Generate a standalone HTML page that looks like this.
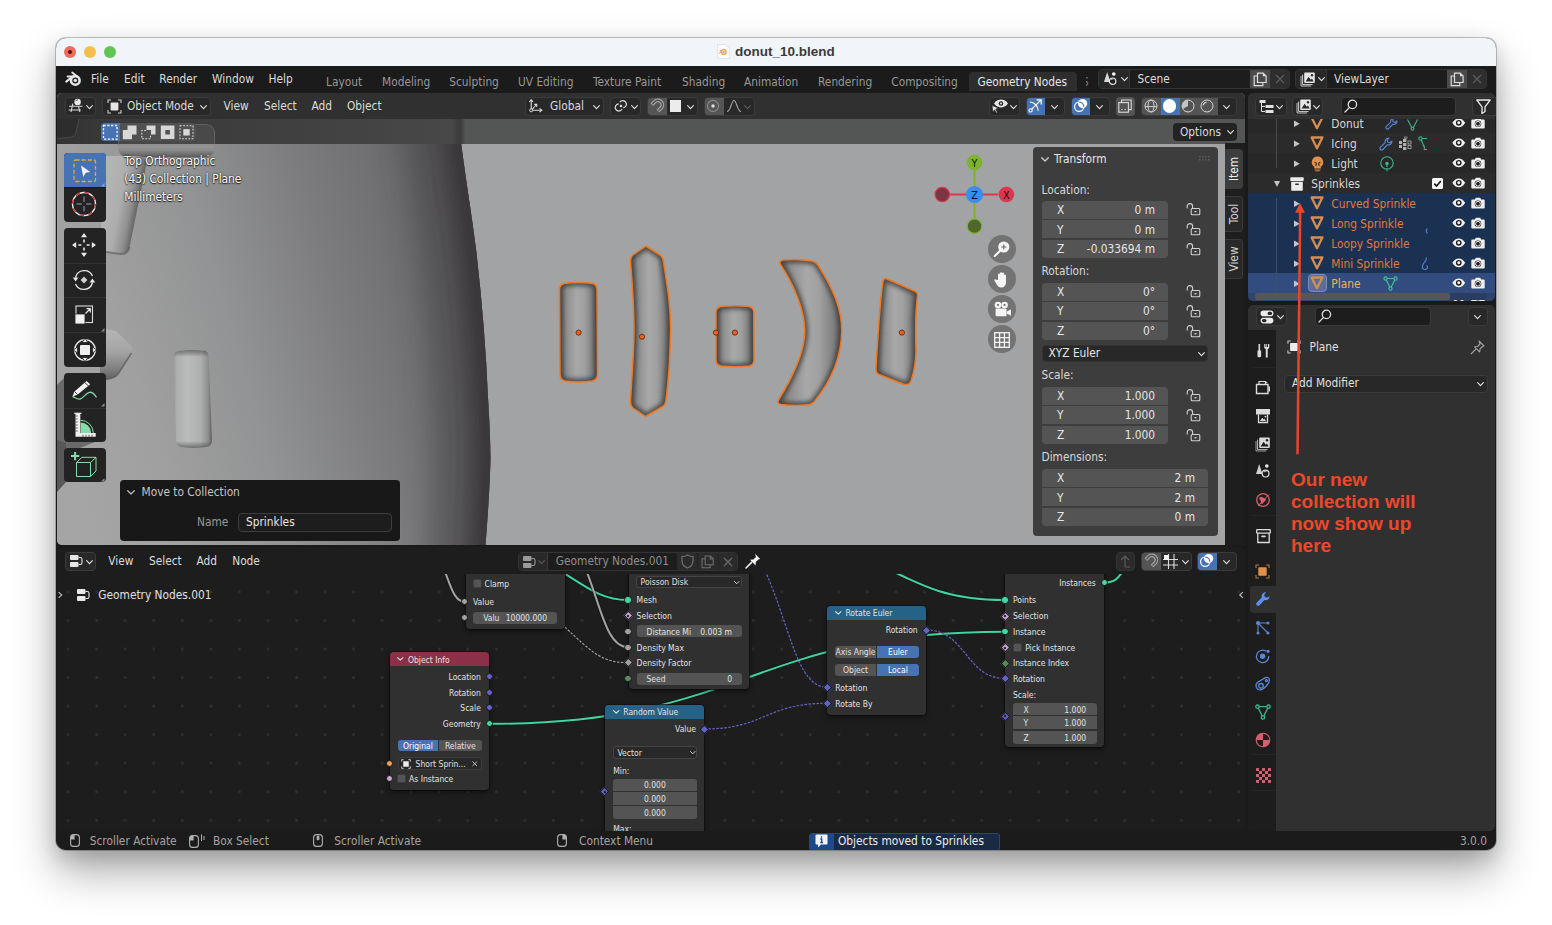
<!DOCTYPE html>
<html lang="en">
<head>
<meta charset="utf-8">
<title>donut_10.blend</title>
<style>
*{box-sizing:border-box;margin:0;padding:0}
html,body{width:1552px;height:925px;overflow:hidden;background:#fff}
body{position:relative;font-family:"DejaVu Sans Condensed","DejaVu Sans","Liberation Sans",sans-serif;font-stretch:condensed;font-size:11.8px;color:#dcdcdc;line-height:14px}
.a{position:absolute}
.t{position:absolute;white-space:nowrap;line-height:14px}
.r{text-align:right}
svg{position:absolute;overflow:visible}
#shadow{position:absolute;left:56px;top:38px;width:1440px;height:812px;border-radius:10px;box-shadow:0 22px 44px rgba(0,0,0,.32),0 8px 20px rgba(0,0,0,.15),0 0 0 1px rgba(0,0,0,.22)}
#win{position:absolute;left:0;top:0;width:1552px;height:925px;clip-path:inset(38px 56px 75px 56px round 10px);background:#1a1a1a}
#titlebar{left:56px;top:38px;width:1440px;height:28px;background:#f1f4f8}
.tl{position:absolute;top:46px;width:12px;height:12px;border-radius:50%}
#title{left:735px;top:44px;font-family:"Liberation Sans",sans-serif;font-stretch:normal;font-weight:bold;font-size:13.5px;color:#3b3b3b;line-height:15px}
.dim{color:#989898}
.btn{position:absolute;background:#282828;border:1px solid #3b3b3b;border-radius:4px}
.blue{background:#4772b3}
.fld{position:absolute;background:#545454;height:18px}
.s11{font-size:10.6px}
.n{font-size:8.5px;line-height:11px;color:#e2e2e2}
</style>
</head>
<body>
<div id="shadow"></div>
<div id="win">
<!-- TITLEBAR -->
<div class="a" id="titlebar"></div>
<div class="tl" style="left:64px;background:#ed6a5e"></div>
<div class="a" style="left:68px;top:50px;width:4px;height:4px;border-radius:50%;background:#5c0f08"></div>
<div class="tl" style="left:84px;background:#f5bf4f"></div>
<div class="tl" style="left:104px;background:#61c554"></div>
<svg style="left:717px;top:44px" width="13" height="15" viewBox="0 0 13 15"><path d="M0.5 0.5h8l4 4v10h-12z" fill="#fafafa" stroke="#d9d9d9" stroke-width=".6"/><circle cx="6.8" cy="8" r="2.3" fill="#fff" stroke="#ee9a45" stroke-width="1.3"/><circle cx="6.8" cy="8" r=".8" fill="#3b67b5"/><path d="M2 9.5l3-2.6M2.6 6.6h3" stroke="#ee9a45" stroke-width="1" fill="none"/></svg>
<div class="t" id="title">donut_10.blend</div>

<!-- TOPBAR -->
<div class="a" id="topbar" style="left:56px;top:66px;width:1440px;height:27px;background:#1b1b1b"></div>
<svg style="left:65px;top:71px" width="17" height="16" viewBox="0 0 17 16"><g fill="none" stroke="#e6e6e6" stroke-linecap="round"><circle cx="10.3" cy="9.4" r="4.3" stroke-width="2.6"/><path d="M7.2 1.6 L12.2 5.6" stroke-width="1.9"/><path d="M2.6 5.5 H9" stroke-width="1.9"/><path d="M1.3 10.6 L7 6" stroke-width="2.1"/></g><circle cx="10.3" cy="9.4" r="1.7" fill="#e6e6e6"/></svg>
<div class="t" style="left:91px;top:71.5px">File</div>
<div class="t" style="left:124px;top:71.5px">Edit</div>
<div class="t" style="left:159.3px;top:71.5px">Render</div>
<div class="t" style="left:212px;top:71.5px">Window</div>
<div class="t" style="left:268.6px;top:71.5px">Help</div>
<div class="t dim" style="left:326px;top:74.6px">Layout</div>
<div class="t dim" style="left:382px;top:74.6px">Modeling</div>
<div class="t dim" style="left:449.3px;top:74.6px">Sculpting</div>
<div class="t dim" style="left:518px;top:74.6px">UV Editing</div>
<div class="t dim" style="left:593px;top:74.6px">Texture Paint</div>
<div class="t dim" style="left:682px;top:74.6px">Shading</div>
<div class="t dim" style="left:744px;top:74.6px">Animation</div>
<div class="t dim" style="left:818px;top:74.6px">Rendering</div>
<div class="t dim" style="left:891.3px;top:74.6px">Compositing</div>
<div class="a" style="left:969px;top:71.500px;width:108px;height:19px;background:#2e2e2e;border-radius:4px 4px 0 0"></div>
<div class="t" style="left:977.5px;top:74.6px;color:#e8e8e8">Geometry Nodes</div>
<div class="a" style="left:1086px;top:72px;width:5px;height:20px;overflow:hidden"><div class="t dim" style="left:-4px;top:2.6px;color:#777">S</div></div>
<!-- scene selector -->
<div class="a" style="left:1098px;top:69px;width:192px;height:20px;border:1px solid #343434;border-radius:4px;background:#1d1d1d;overflow:hidden">
 <div class="a" style="left:0;top:0;width:31px;height:18px;background:#282828;border-right:1px solid #363636"></div>
 <div class="a" style="left:151px;top:0;width:20px;height:18px;background:#4a4a4a"></div>
 <div class="a" style="left:171px;top:0;width:20px;height:18px;background:#2e2e2e"></div>
</div>
<svg style="left:1103px;top:71px" width="16" height="16" viewBox="0 0 16 16"><path d="M4.2 1 L7.4 11 H1 Z" fill="#d8d8d8"/><circle cx="10.8" cy="3" r="1.8" fill="#fff"/><circle cx="9.6" cy="10.2" r="3.2" fill="#1f1f1f" stroke="#e6e6e6" stroke-width="1.2"/><path d="M8 8.6a2.3 2.3 0 0 1 2.4-.6" stroke="#e6e6e6" stroke-width=".9" fill="none"/></svg>
<svg style="left:1120.5px;top:76.5px;color:#e0e0e0" width="7" height="4.5" viewBox="0 0 8 5" preserveAspectRatio="none"><path d="M0.7 0.7 L4 4 L7.3 0.7" fill="none" stroke="currentColor" stroke-width="1.3" stroke-linecap="round" stroke-linejoin="round"/></svg>
<div class="t" style="left:1137.5px;top:71.6px">Scene</div>
<svg style="left:1253px;top:71.5px" width="15" height="15" viewBox="0 0 15 15" fill="none" stroke="#dedede" stroke-width="1.2"><path d="M4.5 3.5V1.1h5.6l3 3V10.5H4.5z" fill="#4a4a4a"/><path d="M9.9 1.1v3.2h3.2" fill="#dedede" stroke="none"/><path d="M4.5 4H1.2v9.6h8.6v-3"/></svg>
<svg style="left:1275px;top:74px" width="10" height="10" viewBox="0 0 10 10"><path d="M1 1L9 9M9 1L1 9" stroke="#5e5e5e" stroke-width="1.1"/></svg>
<!-- viewlayer selector -->
<div class="a" style="left:1295px;top:69px;width:192px;height:20px;border:1px solid #343434;border-radius:4px;background:#1d1d1d;overflow:hidden">
 <div class="a" style="left:0;top:0;width:31px;height:18px;background:#282828;border-right:1px solid #363636"></div>
 <div class="a" style="left:151px;top:0;width:20px;height:18px;background:#4a4a4a"></div>
 <div class="a" style="left:171px;top:0;width:20px;height:18px;background:#2e2e2e"></div>
</div>
<svg style="left:1300px;top:71px" width="16" height="16" viewBox="0 0 16 16"><path d="M1 5v10h10" fill="none" stroke="#bdbdbd" stroke-width="1"/><path d="M2.6 3.6v10h10" fill="none" stroke="#d0d0d0" stroke-width="1"/><rect x="4.2" y="1.4" width="10.6" height="10.6" rx="1" fill="#e6e6e6"/><path d="M5.6 10.4l3-4.6 2.2 3 1.2-1.4 1.6 3z" fill="#2a2a2a"/><circle cx="12" cy="4.3" r="1.2" fill="#2a2a2a"/></svg>
<svg style="left:1317.5px;top:76.5px;color:#e0e0e0" width="7" height="4.5" viewBox="0 0 8 5" preserveAspectRatio="none"><path d="M0.7 0.7 L4 4 L7.3 0.7" fill="none" stroke="currentColor" stroke-width="1.3" stroke-linecap="round" stroke-linejoin="round"/></svg>
<div class="t" style="left:1334px;top:71.6px">ViewLayer</div>
<svg style="left:1450px;top:71.5px" width="15" height="15" viewBox="0 0 15 15" fill="none" stroke="#dedede" stroke-width="1.2"><path d="M4.5 3.5V1.1h5.6l3 3V10.5H4.5z" fill="#4a4a4a"/><path d="M9.9 1.1v3.2h3.2" fill="#dedede" stroke="none"/><path d="M4.5 4H1.2v9.6h8.6v-3"/></svg>
<svg style="left:1472px;top:74px" width="10" height="10" viewBox="0 0 10 10"><path d="M1 1L9 9M9 1L1 9" stroke="#5e5e5e" stroke-width="1.1"/></svg>

<!-- VIEWPORT SCENE -->
<div class="a" id="vp" style="left:57px;top:93px;width:1188px;height:452px;background:#a1a3a5;border-radius:5px;overflow:hidden">
<svg style="left:0;top:0" width="1188" height="452" viewBox="57 93 1188 452">
<defs>
<linearGradient id="gbig" gradientUnits="userSpaceOnUse" x1="60" y1="440" x2="480" y2="318">
<stop offset="0" stop-color="#a5a5a5"/><stop offset=".2" stop-color="#a0a0a0"/><stop offset=".45" stop-color="#929394"/><stop offset=".7" stop-color="#7c7c7e"/><stop offset=".93" stop-color="#6b6b6d"/><stop offset="1" stop-color="#656567"/>
</linearGradient>
<clipPath id="cbig"><path d="M57 93 H455 L458 118 C464 170 472 215 476 249 C482 300 486 350 488 398 C490 430 491 455 490 473 C489 500 487 525 485.5 545 H57 Z"/></clipPath>
<filter id="bl18" filterUnits="userSpaceOnUse" x="250" y="20" width="400" height="600"><feGaussianBlur stdDeviation="16"/></filter>
<filter id="bl8" filterUnits="userSpaceOnUse" x="330" y="20" width="260" height="600"><feGaussianBlur stdDeviation="7"/></filter>
<filter id="bl3" filterUnits="userSpaceOnUse" x="370" y="20" width="180" height="600"><feGaussianBlur stdDeviation="2.5"/></filter>
<linearGradient id="gcap" x1="0" y1="0" x2="1" y2="0">
<stop offset="0" stop-color="#5f5f5f"/><stop offset=".12" stop-color="#8a8a8a"/><stop offset=".4" stop-color="#a8a8a8"/><stop offset=".6" stop-color="#a2a2a2"/><stop offset=".85" stop-color="#7c7c7c"/><stop offset="1" stop-color="#565656"/>
</linearGradient>
<linearGradient id="gcapv" x1="0" y1="0" x2="0" y2="1">
<stop offset="0" stop-color="#6a6a6a"/><stop offset=".2" stop-color="#9c9c9c"/><stop offset=".5" stop-color="#a9a9a9"/><stop offset=".8" stop-color="#8a8a8a"/><stop offset="1" stop-color="#5c5c5c"/>
</linearGradient>
<linearGradient id="gends" x1="0" y1="0" x2="0" y2="1">
<stop offset="0" stop-color="#333" stop-opacity=".55"/><stop offset=".07" stop-color="#333" stop-opacity="0"/><stop offset=".93" stop-color="#333" stop-opacity="0"/><stop offset="1" stop-color="#333" stop-opacity=".55"/>
</linearGradient>
<linearGradient id="gtilt" gradientUnits="userSpaceOnUse" x1="104" y1="200" x2="140" y2="207"><stop offset="0" stop-color="#b4b4b4"/><stop offset=".45" stop-color="#adadad"/><stop offset=".75" stop-color="#8e8e8e"/><stop offset="1" stop-color="#585858"/></linearGradient>
<linearGradient id="gpt" x1="0" y1="0" x2="0" y2="1"><stop offset="0" stop-color="#b6b6b6"/><stop offset=".45" stop-color="#a4a4a4"/><stop offset=".8" stop-color="#7c7c7c"/><stop offset="1" stop-color="#5c5c5c"/></linearGradient>
<linearGradient id="gcap2" x1="0" y1="0" x2="1" y2="0"><stop offset="0" stop-color="#9a9a9a"/><stop offset=".08" stop-color="#adaeae"/><stop offset=".35" stop-color="#babbbc"/><stop offset=".7" stop-color="#aeafb0"/><stop offset=".9" stop-color="#8e8e8e"/><stop offset="1" stop-color="#5e5e5e"/></linearGradient>
<filter id="soft"><feGaussianBlur stdDeviation="1.2"/></filter>
</defs>
<!-- big dark object -->
<path d="M57 93 H455 L458 118 C464 170 472 215 476 249 C482 300 486 350 488 398 C490 430 491 455 490 473 C489 500 487 525 485.5 545 H57 Z" fill="url(#gbig)"/>
<g clip-path="url(#cbig)"><path d="M455 60 L458 118 C464 170 472 215 476 249 C482 300 486 350 488 398 C490 430 491 455 490 473 C489 500 487 525 485.500 580" fill="none" stroke="#3a393b" stroke-width="110" filter="url(#bl18)" opacity=".5"/><path d="M455 60 L458 118 C464 170 472 215 476 249 C482 300 486 350 488 398 C490 430 491 455 490 473 C489 500 487 525 485.500 580" fill="none" stroke="#3a393b" stroke-width="40" filter="url(#bl8)" opacity=".7"/><path d="M455 60 L458 118 C464 170 472 215 476 249 C482 300 486 350 488 398 C490 430 491 455 490 473 C489 500 487 525 485.500 580" fill="none" stroke="#3b393b" stroke-width="16" filter="url(#bl3)" opacity=".9"/></g>
<!-- background sprinkles on left -->
<path d="M57 118 H100 L94 133 Q92 137 86 137 L57 138 Z" fill="#6d6d6d"/>
<rect x="118" y="124" width="97" height="33" rx="9" fill="url(#gcapv)"/>
<path d="M104 156 L139 156 Q147.500 157 146 166 L129.500 247 Q127.500 255 119.500 254 L100 251 Z" fill="url(#gtilt)"/><path d="M129.500 247 Q127.500 255 119.500 254 L100 251" fill="none" stroke="#5a5a5a" stroke-width="2" opacity=".6"/>
<path d="M100 328 L112 330 Q116 331 118 333 L131 346 Q134 349 131.500 353 L118 374 Q116 377 112 378 L100 381 Z" fill="url(#gpt)"/><path d="M131.500 353 L118 374 Q116 377 112 378 L100 381" fill="none" stroke="#555" stroke-width="1.500" opacity=".7"/>
<path d="M57 385 L66 376 L100 376 L100 440 L70 452 L57 446 Z" fill="#6a6a6a"/>
<path d="M57 440 L66 443 L66 482 L57 492 Z" fill="#585858"/>
<!-- standalone sprinkle -->
<path d="M178.500 351 Q191.500 349 205.500 351 Q208.500 352 208.500 356 L212 440 Q212 446 206 447 Q193 449 181 447 Q176 446 176 441 L173.500 357 Q173.500 352 178.500 351 Z" fill="url(#gcap2)"/>
<path d="M178.500 351 Q191.500 349 205.500 351 Q208.500 352 208.500 356 L212 440 Q212 446 206 447 Q193 449 181 447 Q176 446 176 441 L173.500 357 Q173.500 352 178.500 351 Z" fill="url(#gends)"/>
</svg>
</div>

<!-- SPRINKLES -->
<svg style="left:540px;top:235px" width="400" height="195" viewBox="540 235 400 195">
<defs>
<linearGradient id="gsp" x1="0" y1="0" x2="1" y2="0"><stop offset="0" stop-color="#6a6a6a"/><stop offset=".18" stop-color="#8e8e8e"/><stop offset=".45" stop-color="#a8a8a8"/><stop offset=".65" stop-color="#a0a0a0"/><stop offset=".88" stop-color="#7e7e7e"/><stop offset="1" stop-color="#606060"/></linearGradient>
<filter id="bsp" x="-30%" y="-30%" width="160%" height="160%"><feGaussianBlur stdDeviation="2"/></filter>
<clipPath id="cs1"><path d="M564 283.500 Q578 281.500 593 283.500 Q596.500 284.500 597 289 L597.500 374 Q597.500 380 592 381 Q578 383 565 381 Q560 380 560 374 L559.500 289 Q560 284.500 564 283.500 Z"/></clipPath>
<clipPath id="cs2"><path d="M646 246 L660 255 Q663 257 663.500 262 C668 290 671 310 670.500 332 C670 360 668 385 666 400 Q665.500 405 662 407 L645.500 416.500 L633 408 Q630.500 406 630.500 401 C632 375 634 350 634 330 C634 305 632 280 630.500 262 Q630.500 257 633 255 Z"/></clipPath>
<clipPath id="cs3"><path d="M721 306.500 Q735 305 749 306.500 Q753.500 307.500 753.800 312 L754 360 Q754 365 749 366 Q735 367.500 721 366 Q716 365 716 360 L716 312 Q716.200 307.500 721 306.500 Z"/></clipPath>
<clipPath id="cs4"><path d="M783 260 Q798 258.500 812 261 Q816 262 818 265 C834 290 842 310 841.700 331 C841.500 355 832 380 814 402 Q811 405 806 405 Q793 406 781 404.500 Q776.500 403.500 778.500 400 C794 375 805 350 804.800 330.500 C804.500 310 794 285 780.500 264.500 Q778.500 261 783 260 Z"/></clipPath>
<clipPath id="cs5"><path d="M886 278.500 Q884 278 883 281 C880 300 878.500 325 876 368 Q875.500 373 879 374.500 L903 384 Q909 386 911 381 C914 372 916 362 916 350 C915.500 335 915 315 917.500 296 Q918 292.500 914.500 291 Z"/></clipPath>
</defs>
<path d="M564 283.500 Q578 281.500 593 283.500 Q596.500 284.500 597 289 L597.500 374 Q597.500 380 592 381 Q578 383 565 381 Q560 380 560 374 L559.500 289 Q560 284.500 564 283.500 Z" fill="url(#gsp)"/>
<g clip-path="url(#cs1)"><path d="M564 283.500 Q578 281.500 593 283.500 Q596.500 284.500 597 289 L597.500 374 Q597.500 380 592 381 Q578 383 565 381 Q560 380 560 374 L559.500 289 Q560 284.500 564 283.500 Z" fill="none" stroke="#3c3c3c" stroke-width="7" filter="url(#bsp)" opacity=".8"/></g>
<path d="M564 283.500 Q578 281.500 593 283.500 Q596.500 284.500 597 289 L597.500 374 Q597.500 380 592 381 Q578 383 565 381 Q560 380 560 374 L559.500 289 Q560 284.500 564 283.500 Z" fill="none" stroke="#f5771c" stroke-width="1.500" stroke-linejoin="round"/>
<path d="M646 246 L660 255 Q663 257 663.500 262 C668 290 671 310 670.500 332 C670 360 668 385 666 400 Q665.500 405 662 407 L645.500 416.500 L633 408 Q630.500 406 630.500 401 C632 375 634 350 634 330 C634 305 632 280 630.500 262 Q630.500 257 633 255 Z" fill="url(#gsp)"/>
<g clip-path="url(#cs2)"><path d="M646 246 L660 255 Q663 257 663.500 262 C668 290 671 310 670.500 332 C670 360 668 385 666 400 Q665.500 405 662 407 L645.500 416.500 L633 408 Q630.500 406 630.500 401 C632 375 634 350 634 330 C634 305 632 280 630.500 262 Q630.500 257 633 255 Z" fill="none" stroke="#3c3c3c" stroke-width="7" filter="url(#bsp)" opacity=".8"/></g>
<path d="M646 246 L660 255 Q663 257 663.500 262 C668 290 671 310 670.500 332 C670 360 668 385 666 400 Q665.500 405 662 407 L645.500 416.500 L633 408 Q630.500 406 630.500 401 C632 375 634 350 634 330 C634 305 632 280 630.500 262 Q630.500 257 633 255 Z" fill="none" stroke="#f5771c" stroke-width="1.500" stroke-linejoin="round"/>
<path d="M721 306.500 Q735 305 749 306.500 Q753.500 307.500 753.800 312 L754 360 Q754 365 749 366 Q735 367.500 721 366 Q716 365 716 360 L716 312 Q716.200 307.500 721 306.500 Z" fill="url(#gsp)"/>
<g clip-path="url(#cs3)"><path d="M721 306.500 Q735 305 749 306.500 Q753.500 307.500 753.800 312 L754 360 Q754 365 749 366 Q735 367.500 721 366 Q716 365 716 360 L716 312 Q716.200 307.500 721 306.500 Z" fill="none" stroke="#3c3c3c" stroke-width="7" filter="url(#bsp)" opacity=".8"/></g>
<path d="M721 306.500 Q735 305 749 306.500 Q753.500 307.500 753.800 312 L754 360 Q754 365 749 366 Q735 367.500 721 366 Q716 365 716 360 L716 312 Q716.200 307.500 721 306.500 Z" fill="none" stroke="#f5771c" stroke-width="1.500" stroke-linejoin="round"/>
<path d="M783 260 Q798 258.500 812 261 Q816 262 818 265 C834 290 842 310 841.700 331 C841.500 355 832 380 814 402 Q811 405 806 405 Q793 406 781 404.500 Q776.500 403.500 778.500 400 C794 375 805 350 804.800 330.500 C804.500 310 794 285 780.500 264.500 Q778.500 261 783 260 Z" fill="url(#gsp)"/>
<g clip-path="url(#cs4)"><path d="M783 260 Q798 258.500 812 261 Q816 262 818 265 C834 290 842 310 841.700 331 C841.500 355 832 380 814 402 Q811 405 806 405 Q793 406 781 404.500 Q776.500 403.500 778.500 400 C794 375 805 350 804.800 330.500 C804.500 310 794 285 780.500 264.500 Q778.500 261 783 260 Z" fill="none" stroke="#3c3c3c" stroke-width="7" filter="url(#bsp)" opacity=".8"/></g>
<path d="M783 260 Q798 258.500 812 261 Q816 262 818 265 C834 290 842 310 841.700 331 C841.500 355 832 380 814 402 Q811 405 806 405 Q793 406 781 404.500 Q776.500 403.500 778.500 400 C794 375 805 350 804.800 330.500 C804.500 310 794 285 780.500 264.500 Q778.500 261 783 260 Z" fill="none" stroke="#f5771c" stroke-width="1.500" stroke-linejoin="round"/>
<path d="M886 278.500 Q884 278 883 281 C880 300 878.500 325 876 368 Q875.500 373 879 374.500 L903 384 Q909 386 911 381 C914 372 916 362 916 350 C915.500 335 915 315 917.500 296 Q918 292.500 914.500 291 Z" fill="url(#gsp)"/>
<g clip-path="url(#cs5)"><path d="M886 278.500 Q884 278 883 281 C880 300 878.500 325 876 368 Q875.500 373 879 374.500 L903 384 Q909 386 911 381 C914 372 916 362 916 350 C915.500 335 915 315 917.500 296 Q918 292.500 914.500 291 Z" fill="none" stroke="#3c3c3c" stroke-width="7" filter="url(#bsp)" opacity=".8"/></g>
<path d="M886 278.500 Q884 278 883 281 C880 300 878.500 325 876 368 Q875.500 373 879 374.500 L903 384 Q909 386 911 381 C914 372 916 362 916 350 C915.500 335 915 315 917.500 296 Q918 292.500 914.500 291 Z" fill="none" stroke="#f5771c" stroke-width="1.500" stroke-linejoin="round"/>
<circle cx="578.6" cy="332.6" r="2.600" fill="#f0601c" stroke="#4a2410" stroke-width=".800"/>
<circle cx="642" cy="336.7" r="2.600" fill="#f0601c" stroke="#4a2410" stroke-width=".800"/>
<circle cx="716" cy="332.6" r="2.600" fill="#f0601c" stroke="#4a2410" stroke-width=".800"/>
<circle cx="734.9" cy="332.6" r="2.600" fill="#f0601c" stroke="#4a2410" stroke-width=".800"/>
<circle cx="901.9" cy="332.6" r="2.600" fill="#f0601c" stroke="#4a2410" stroke-width=".800"/>
</svg>

<!-- VIEWPORT HEADER -->
<div class="a" style="left:57px;top:93px;width:1188px;height:25.5px;background:#303030;border-radius:5px 5px 0 0"></div>
<div class="a" style="left:57px;top:118.500px;width:1188px;height:25px;background:linear-gradient(to right,#333 0,#3a3a3a 5%,#3f3f3f 18%,#464646 30%,#484848 33.2%,#3d3d3d 33.7%,#3d3d3d 34%,#545655 34.4%,#545655 100%)"></div>
<div class="a" style="left:118px;top:124px;width:97px;height:22px;border-radius:9px 9px 0 0;border:1px solid rgba(125,125,125,.5);border-bottom:none;background:rgba(110,110,110,.25)"></div>
<!-- editor type -->
<div class="btn" style="left:64.5px;top:96.5px;width:31px;height:19px"></div>
<svg style="left:68px;top:98px" width="16" height="15" viewBox="0 0 16 15"><g stroke="#d6d6d6" stroke-width="1.1" fill="none"><path d="M1 8.3H14.5M0.6 12H13"/><path d="M4.8 5.6L3 14M10.5 8.4L11.8 14"/></g><circle cx="9.6" cy="3.9" r="3.2" fill="#ececec"/><path d="M7.6 3.2a2.2 2.2 0 0 1 2.5-1.3" stroke="#303030" stroke-width=".8" fill="none"/></svg>
<svg style="left:86px;top:104.5px;color:#e0e0e0" width="7" height="4.5" viewBox="0 0 8 5" preserveAspectRatio="none"><path d="M0.7 0.7 L4 4 L7.3 0.7" fill="none" stroke="currentColor" stroke-width="1.3" stroke-linecap="round" stroke-linejoin="round"/></svg>
<!-- object mode -->
<div class="btn" style="left:101.5px;top:96.5px;width:109px;height:19px"></div>
<svg style="left:106.5px;top:98.5px" width="15" height="15" viewBox="0 0 15 15"><path d="M1 4V1H4M11 1H14V4M14 11V14H11M4 14H1V11" fill="none" stroke="#d0d0d0" stroke-width="1.1"/><rect x="3.6" y="3.6" width="7.8" height="7.8" rx=".8" fill="#e6e6e6"/></svg>
<div class="t" style="left:127px;top:98.7px">Object Mode</div>
<svg style="left:199.5px;top:104.5px;color:#e0e0e0" width="7" height="4.5" viewBox="0 0 8 5" preserveAspectRatio="none"><path d="M0.7 0.7 L4 4 L7.3 0.7" fill="none" stroke="currentColor" stroke-width="1.3" stroke-linecap="round" stroke-linejoin="round"/></svg>
<div class="t" style="left:223.5px;top:98.7px">View</div>
<div class="t" style="left:264px;top:98.7px">Select</div>
<div class="t" style="left:311.5px;top:98.7px">Add</div>
<div class="t" style="left:347px;top:98.7px">Object</div>
<!-- transform orientation -->
<div class="btn" style="left:524.5px;top:96.5px;width:79px;height:19px"></div>
<svg style="left:528px;top:98px" width="16" height="16" viewBox="0 0 16 16"><g fill="none" stroke="#dcdcdc" stroke-width="1.1"><path d="M3.2 2V12.3H13.5M3.2 12.3L8.5 6.5"/><path d="M1.4 4L3.2 1.6L5 4M11.5 10.4L13.8 12.3L11.5 14.2M6.2 6.4h2.5v2.5"/></g><circle cx="3.2" cy="12.3" r="1.5" fill="#303030" stroke="#dcdcdc" stroke-width="1"/></svg>
<div class="t" style="left:550px;top:98.7px">Global</div>
<svg style="left:593px;top:104.5px;color:#e0e0e0" width="7" height="4.5" viewBox="0 0 8 5" preserveAspectRatio="none"><path d="M0.7 0.7 L4 4 L7.3 0.7" fill="none" stroke="currentColor" stroke-width="1.3" stroke-linecap="round" stroke-linejoin="round"/></svg>
<!-- pivot -->
<div class="btn" style="left:609.5px;top:96.5px;width:31px;height:19px"></div>
<svg style="left:612.5px;top:98px" width="16" height="16" viewBox="0 0 16 16"><g fill="none" stroke="#dcdcdc" stroke-width="1.2"><path d="M6.8 4.2a3.6 3.6 0 1 1 3.4 5.6"/><path d="M9 11.3a3.6 3.6 0 1 1-3.3-5.4"/></g><circle cx="8" cy="8" r="1.3" fill="#dcdcdc"/></svg>
<svg style="left:631px;top:104.5px;color:#e0e0e0" width="7" height="4.5" viewBox="0 0 8 5" preserveAspectRatio="none"><path d="M0.7 0.7 L4 4 L7.3 0.7" fill="none" stroke="currentColor" stroke-width="1.3" stroke-linecap="round" stroke-linejoin="round"/></svg>
<!-- snap -->
<div class="btn" style="left:646.5px;top:96.5px;width:51px;height:19px;overflow:hidden"><div class="a" style="left:0;top:0;width:19px;height:17px;background:#555"></div></div>
<svg style="left:649px;top:98px" width="15" height="16" viewBox="0 0 15 16"><path d="M2.800 6.600L6.200 3.300A4.500 4.500 0 0 1 12.400 9.700L9 13" fill="none" stroke="#a6a6a6" stroke-width="3.700" stroke-linecap="butt"/><path d="M3.300 6.100L6.200 3.300A4.500 4.500 0 0 1 12.400 9.700L9.500 12.500" fill="none" stroke="#555" stroke-width="1.500" stroke-linecap="butt"/></svg>

<div class="a" style="left:669.5px;top:100px;width:11.5px;height:11.5px;background:#ececec"></div>
<svg style="left:686.5px;top:104.5px;color:#e0e0e0" width="7" height="4.5" viewBox="0 0 8 5" preserveAspectRatio="none"><path d="M0.7 0.7 L4 4 L7.3 0.7" fill="none" stroke="currentColor" stroke-width="1.3" stroke-linecap="round" stroke-linejoin="round"/></svg>
<!-- proportional -->
<div class="btn" style="left:703.5px;top:96.5px;width:51px;height:19px;overflow:hidden"><div class="a" style="left:0;top:0;width:19px;height:17px;background:#555"></div></div>
<svg style="left:706px;top:99px" width="14" height="14" viewBox="0 0 14 14"><circle cx="7" cy="7" r="5.6" fill="none" stroke="#8a8a8a" stroke-width="1.1"/><circle cx="7" cy="7" r="1.7" fill="#dcdcdc"/></svg>
<svg style="left:726px;top:99px" width="16" height="14" viewBox="0 0 16 14"><path d="M1 12.5C5 12.5 5.2 1.5 8 1.5S11 12.5 15 12.5" fill="none" stroke="#a4a4a4" stroke-width="1.1"/></svg>
<svg style="left:744px;top:104.5px;color:#5a5a5a" width="7" height="4.5" viewBox="0 0 8 5" preserveAspectRatio="none"><path d="M0.7 0.7 L4 4 L7.3 0.7" fill="none" stroke="currentColor" stroke-width="1.3" stroke-linecap="round" stroke-linejoin="round"/></svg>
<!-- right group: visibility -->
<div class="btn" style="left:988.5px;top:96.5px;width:31px;height:19px"></div>
<svg style="left:991px;top:97.5px" width="18" height="17" viewBox="0 0 18 17"><path d="M3 5.5C5 2.4 8 1.6 10 1.6s5 .8 7 3.9C15 8.6 12 9.4 10 9.4S5 8.6 3 5.5z" fill="#e6e6e6"/><circle cx="10" cy="5.5" r="2.3" fill="#282828"/><circle cx="10" cy="5.5" r="1" fill="#e6e6e6"/><path d="M1 7.5l6.2 2.6-2.5 1.2 1.7 3-1.1.6-1.7-3L2 13.8z" fill="#e6e6e6" stroke="#282828" stroke-width=".6"/></svg>
<svg style="left:1010px;top:104.5px;color:#e0e0e0" width="7" height="4.5" viewBox="0 0 8 5" preserveAspectRatio="none"><path d="M0.7 0.7 L4 4 L7.3 0.7" fill="none" stroke="currentColor" stroke-width="1.3" stroke-linecap="round" stroke-linejoin="round"/></svg>
<!-- gizmo -->
<div class="btn" style="left:1026px;top:96.5px;width:39px;height:19px;overflow:hidden"><div class="a blue" style="left:0;top:0;width:18px;height:17px"></div></div>
<svg style="left:1028px;top:98px" width="15" height="15" viewBox="0 0 15 15"><g fill="none" stroke="#fff" stroke-width="1.2"><path d="M2.5 12.5L12.8 2.2M8.6 1.8h4.6v4.6"/><path d="M2 4.2c4.2 0 8.2 3.8 8.2 8.6"/></g><circle cx="2.6" cy="12.4" r="1.6" fill="#4772b3" stroke="#fff" stroke-width="1.1"/></svg>
<svg style="left:1050.5px;top:104.5px;color:#e0e0e0" width="7" height="4.5" viewBox="0 0 8 5" preserveAspectRatio="none"><path d="M0.7 0.7 L4 4 L7.3 0.7" fill="none" stroke="currentColor" stroke-width="1.3" stroke-linecap="round" stroke-linejoin="round"/></svg>
<!-- overlay -->
<div class="btn" style="left:1071px;top:96.5px;width:39px;height:19px;overflow:hidden"><div class="a blue" style="left:0;top:0;width:18px;height:17px"></div></div>
<svg style="left:1072.5px;top:98px" width="16" height="15" viewBox="0 0 16 15"><circle cx="9.6" cy="5.6" r="4.6" fill="#fff"/><circle cx="6.2" cy="8.8" r="4.6" fill="none" stroke="#fff" stroke-width="1.2"/><path d="M6.2 4.2a4.6 4.6 0 0 1 4.6 4.6" fill="none" stroke="#4772b3" stroke-width="1.2"/></svg>
<svg style="left:1095.5px;top:104.5px;color:#e0e0e0" width="7" height="4.5" viewBox="0 0 8 5" preserveAspectRatio="none"><path d="M0.7 0.7 L4 4 L7.3 0.7" fill="none" stroke="currentColor" stroke-width="1.3" stroke-linecap="round" stroke-linejoin="round"/></svg>
<!-- xray -->
<div class="a" style="left:1115.5px;top:96.5px;width:19px;height:19px;background:#545454;border-radius:4px"></div>
<svg style="left:1118px;top:99px" width="14" height="14" viewBox="0 0 14 14" fill="none" stroke="#dcdcdc" stroke-width="1.1"><path d="M3.6 3.4V1h9.6v9.6h-2.4"/><rect x=".8" y="3.6" width="9.6" height="9.6"/><path d="M3.4 6.5v.01M3.4 10.5H4.5M6.6 10.5h1.2" stroke-width="1.2"/></svg>
<!-- shading -->
<div class="a" style="left:1140.5px;top:96.5px;width:96px;height:19px;border-radius:4px;overflow:hidden;background:#282828;border:1px solid #3b3b3b">
<div class="a" style="left:0;top:0;width:19px;height:17px;background:#545454"></div>
<div class="a blue" style="left:19.5px;top:0;width:18.5px;height:17px"></div>
<div class="a" style="left:38.5px;top:0;width:18.5px;height:17px;background:#545454"></div>
<div class="a" style="left:57.5px;top:0;width:18.5px;height:17px;background:#545454"></div>
</div>
<svg style="left:1143.5px;top:99px" width="14" height="14" viewBox="0 0 14 14" fill="none" stroke="#d0d0d0" stroke-width="1"><circle cx="7" cy="7" r="6"/><path d="M1.100 7.600H12.900"/><ellipse cx="7" cy="7" rx="3" ry="6"/></svg>
<div class="a" style="left:1163px;top:99.3px;width:13.4px;height:13.4px;border-radius:50%;background:#fff"></div>
<svg style="left:1181px;top:99px" width="14" height="14" viewBox="0 0 14 14"><circle cx="7" cy="7" r="6" fill="none" stroke="#d0d0d0" stroke-width="1"/><path d="M7 7V1A6 6 0 0 0 1.8 10z" fill="#c4c4c4"/><path d="M3.5 11.5l1 .8M5.8 12.6l1.2.3M9 12.4l1-.5" stroke="#d0d0d0" stroke-width=".9"/></svg>
<svg style="left:1200px;top:99px" width="14" height="14" viewBox="0 0 14 14"><circle cx="7" cy="7" r="6" fill="none" stroke="#d0d0d0" stroke-width="1"/><path d="M3.2 6.4a4 4 0 0 1 3.4-3.3" fill="none" stroke="#d0d0d0" stroke-width="1.2"/><path d="M5 12l1.2.5M8 12.6l1.2-.4M10.4 11.4l.8-.9" stroke="#d0d0d0" stroke-width=".9"/></svg>
<svg style="left:1222.5px;top:104.5px;color:#e0e0e0" width="7" height="4.5" viewBox="0 0 8 5" preserveAspectRatio="none"><path d="M0.7 0.7 L4 4 L7.3 0.7" fill="none" stroke="currentColor" stroke-width="1.3" stroke-linecap="round" stroke-linejoin="round"/></svg>
<!-- selection mode buttons -->
<div class="a" style="left:101px;top:122.500px;width:94.500px;height:18.500px;border-radius:4px;overflow:hidden;background:#383838">
<div class="a blue" style="left:0;top:0;width:18.600px;height:18.500px"></div>
<div class="a" style="left:19.200px;top:0;width:18.400px;height:18.500px;background:#515151"></div>
<div class="a" style="left:38.200px;top:0;width:18.400px;height:18.500px;background:#515151"></div>
<div class="a" style="left:57.200px;top:0;width:18.400px;height:18.500px;background:#515151"></div>
<div class="a" style="left:76.200px;top:0;width:18.400px;height:18.500px;background:#515151"></div>
</div>
<svg style="left:101px;top:122.500px" width="95" height="19" viewBox="0 0 95 19">
<rect x="2.500" y="2.500" width="13.600" height="13.600" fill="none" stroke="#fff" stroke-width="1.300" stroke-dasharray="2.200 1.600"/>
<path d="M26.500 2.500h9v9h-4.500v4.800h-9.200V7h4.700z" fill="#d8d8d8"/>
<path d="M45.500 2.500h9v9h-4.500V7h-4.500z" fill="#d8d8d8"/><path d="M45 7.500h-4.200v8.300h8.700v-4" fill="none" stroke="#d8d8d8" stroke-width="1.100" stroke-dasharray="1.800 1.400"/>
<path d="M59.800 2.500h13.600v13.600h-13.600z M64.300 7v4.600h4.600V7z" fill="#d8d8d8" fill-rule="evenodd"/>
<rect x="79" y="2.800" width="13" height="13" fill="none" stroke="#d8d8d8" stroke-width="1.100" stroke-dasharray="1.800 1.400"/><rect x="82.300" y="6.100" width="6.400" height="6.400" fill="#d8d8d8"/>
</svg>
<svg style="left:57px;top:118.500px" width="50" height="22" viewBox="0 0 50 22"><path d="M0 0H22L19 13Q18 18 12 18.500L0 19.500Z" fill="#2d2d2d"/><path d="M22 0L19 13Q18 18 12 18.500L0 19.500" fill="none" stroke="#4a4a4a" stroke-width="1"/></svg>
<!-- options -->
<div class="a" style="left:1173px;top:122.5px;width:64px;height:18.5px;border-radius:4px;background:#232323"></div>
<div class="t" style="left:1180px;top:124.7px">Options</div>
<svg style="left:1226.500px;top:130px;color:#e0e0e0" width="7" height="4.5" viewBox="0 0 8 5" preserveAspectRatio="none"><path d="M0.7 0.7 L4 4 L7.3 0.7" fill="none" stroke="currentColor" stroke-width="1.3" stroke-linecap="round" stroke-linejoin="round"/></svg>

<!-- TOOLBAR -->
<div class="a" style="left:64px;top:153px;width:42px;height:69px;border-radius:4px;background:#232323;overflow:hidden"><div class="a blue" style="left:0;top:0;width:42px;height:34px"></div><div class="a" style="left:0;top:34px;width:42px;height:1px;background:#1a1a1a"></div></div>
<div class="a" style="left:64px;top:228px;width:42px;height:139px;border-radius:4px;background:#232323"><div class="a" style="left:0;top:34.5px;width:42px;height:1px;background:#333"></div><div class="a" style="left:0;top:69px;width:42px;height:1px;background:#333"></div><div class="a" style="left:0;top:104px;width:42px;height:1px;background:#333"></div></div>
<div class="a" style="left:64px;top:373px;width:42px;height:69px;border-radius:4px;background:#232323"><div class="a" style="left:0;top:34.5px;width:42px;height:1px;background:#333"></div></div>
<div class="a" style="left:64px;top:448px;width:42px;height:34px;border-radius:4px;background:#232323"></div>
<!-- select box icon -->
<svg style="left:72.500px;top:158.500px" width="24" height="24" viewBox="0 0 24 24"><rect x="1" y="1" width="21.500" height="21.500" rx="1.500" fill="none" stroke="#f5a623" stroke-width="1.300" stroke-dasharray="4 2.200"/><path d="M8 6.500l9.300 6.600-4.600.7-2.400 4.200z" fill="#f2f2f2"/></svg>

<svg style="left:101px;top:182.5px" width="3.500" height="3.500" viewBox="0 0 5 5"><path d="M5 0V5H0z" fill="#8aa4d0"/></svg>
<!-- cursor icon -->
<svg style="left:71px;top:191px" width="26" height="26" viewBox="0 0 26 26"><circle cx="13" cy="13" r="11.500" fill="none" stroke="#f0f0f0" stroke-width="1.400"/><circle cx="13" cy="13" r="11.500" fill="none" stroke="#c8343a" stroke-width="1.400" stroke-dasharray="4.500 4.530"/><path d="M13 5.500v5.500M13 15v5.500M5.500 13h5.500M15 13h5.500" stroke="#9c9c9c" stroke-width="1"/></svg>
<!-- move icon -->
<svg style="left:71px;top:232px" width="26" height="26" viewBox="0 0 26 26" fill="#e8e8e8"><path d="M13 1l3 4.200h-6zM13 25l-3-4.200h6zM1 13l4.200-3v6zM25 13l-4.200 3v-6z"/><path d="M13 7.400v3M13 15.600v3M7.400 13h3M15.600 13h3" stroke="#e8e8e8" stroke-width="1.600"/></svg>
<!-- rotate icon -->
<svg style="left:71px;top:266.500px" width="26" height="26" viewBox="0 0 26 26"><g fill="none" stroke="#e8e8e8" stroke-width="1.300"><path d="M4.500 10.500a9 9 0 0 1 17-1.500"/><path d="M21.500 15.500a9 9 0 0 1-17 1.500"/></g><path d="M1.800 10.400h5.600l-2.800 4.200zM24.200 15.600h-5.600l2.800-4.200z" fill="#e8e8e8"/><path d="M13 9.600l3.400 3.400-3.400 3.400-3.400-3.400z" fill="#d0d0d0"/></svg>
<!-- scale icon -->
<svg style="left:73px;top:303px" width="24" height="24" viewBox="0 0 24 24"><rect x="3" y="3" width="16.500" height="16.500" fill="none" stroke="#dcdcdc" stroke-width="1.100"/><path d="M2 11h10v10H2z" fill="#f0f0f0" stroke="#232323" stroke-width=".8"/><path d="M12.500 10.500l4.500-4.500M13.500 5.700h3.800v3.800" fill="none" stroke="#e6e6e6" stroke-width="1.200"/></svg>
<svg style="left:101px;top:327.5px" width="3.500" height="3.500" viewBox="0 0 5 5"><path d="M5 0V5H0z" fill="#8a8a8a"/></svg>
<!-- transform icon -->
<svg style="left:72px;top:336.500px" width="26" height="26" viewBox="0 0 26 26"><circle cx="13" cy="13" r="10.300" fill="none" stroke="#e8e8e8" stroke-width="1.300"/><rect x="8" y="8" width="10" height="10" rx="1" fill="#f0f0f0"/><path d="M13 1.500l3 4h-6zM13 24.500l-3-4h6zM1.500 13l4-3v6zM24.500 13l-4 3v-6z" fill="#e8e8e8" stroke="#232323" stroke-width=".8"/></svg>
<!-- annotate icon -->
<svg style="left:70px;top:378px" width="30" height="26" viewBox="70 378 30 26"><path d="M72.500 396.300c3 1.500 5 3.600 8 2.600s5.500-6 9-6.600 5 2 7 5" fill="none" stroke="#7fd6a3" stroke-width="1.300"/><path d="M86.600 381l3.600 3.200-12.800 10.600-4.800 1.600 1.600-4.600z" fill="#f2f2f2"/><path d="M84.800 382.600l3.600 3.200M74.600 391.600l3 3" stroke="#232323" stroke-width=".9"/></svg>
<svg style="left:101px;top:402.5px" width="3.500" height="3.500" viewBox="0 0 5 5"><path d="M5 0V5H0z" fill="#8a8a8a"/></svg>
<!-- measure icon -->
<svg style="left:72px;top:411px" width="26" height="28" viewBox="72 411 26 28"><path d="M80.600 422.500A10.500 10.500 0 0 1 91.100 433H80.600z" fill="#86dcaa"/><path d="M80.600 420.300A12.700 12.700 0 0 1 93.300 433" fill="none" stroke="#86dcaa" stroke-width="1"/><path d="M75.500 413.500h4.800v19.600h15.400v3.600H75.500z" fill="#f0f0f0"/><path d="M75.500 416h2.200M75.500 419h2.200M75.500 422h2.200M75.500 425h2.200M75.500 428h2.200M75.500 431h2.200M83 436.700v-2M86 436.700v-2M89 436.700v-2M92 436.700v-2" stroke="#232323" stroke-width=".7"/><path d="M74.300 413.300h7.200" stroke="#f0f0f0" stroke-width="1.200"/></svg>
<!-- add cube icon -->
<svg style="left:69px;top:451px" width="32" height="30" viewBox="69 451 32 30"><path d="M75.100 452v8.200M71 456.100h8.200" stroke="#86dcaa" stroke-width="2"/><g fill="none" stroke="#86dcaa" stroke-width="1" stroke-linejoin="round"><path d="M76.500 462.500l5.500-5.200h14v13.700l-5.500 5.500h-14z"/><path d="M76.500 462.500h14v14M90.500 462.500l5.500-5.200"/></g></svg>
<svg style="left:101px;top:477.5px" width="3.500" height="3.500" viewBox="0 0 5 5"><path d="M5 0V5H0z" fill="#8a8a8a"/></svg>
<!-- viewport text overlay -->
<div class="t" style="left:124.300px;top:153.500px;color:#fff;text-shadow:0 0 2px #000,0 1px 1px rgba(0,0,0,.7)">Top Orthographic</div>
<div class="t" style="left:124.300px;top:171.500px;color:#fff;text-shadow:0 0 2px #000,0 1px 1px rgba(0,0,0,.7)">(43) Collection | Plane</div>
<div class="t" style="left:124.300px;top:189.500px;color:#fff;text-shadow:0 0 2px #000,0 1px 1px rgba(0,0,0,.7)">Millimeters</div>
<!-- Move to collection panel -->
<div class="a" style="left:119.500px;top:479.500px;width:280.500px;height:61px;border-radius:4px;background:#181818"></div>
<svg style="left:127px;top:489.500px;color:#b8b8b8" width="8" height="5" viewBox="0 0 8 5" preserveAspectRatio="none"><path d="M0.7 0.7 L4 4 L7.3 0.7" fill="none" stroke="currentColor" stroke-width="1.3" stroke-linecap="round" stroke-linejoin="round"/></svg>
<div class="t" style="left:141.500px;top:485px;color:#c6c6c6">Move to Collection</div>
<div class="t" style="left:197px;top:515px;color:#989898">Name</div>
<div class="a" style="left:238px;top:512.500px;width:154px;height:19.500px;border:1px solid #3e3e3e;border-radius:4px;background:#1d1d1d"></div>
<div class="t" style="left:246px;top:515px;color:#e6e6e6">Sprinkles</div>

<!-- N PANEL -->
<div class="a" style="left:1225px;top:143px;width:20px;height:402px;background:#1e1e1e"></div>
<div class="a" style="left:1033px;top:146.500px;width:184.500px;height:389px;border-radius:4px;background:#3d3d3d"></div>
<svg style="left:1040.500px;top:156.500px;color:#d0d0d0" width="8" height="5" viewBox="0 0 8 5" preserveAspectRatio="none"><path d="M0.7 0.7 L4 4 L7.3 0.7" fill="none" stroke="currentColor" stroke-width="1.3" stroke-linecap="round" stroke-linejoin="round"/></svg>
<div class="t" style="left:1054px;top:152.300px;color:#e6e6e6">Transform</div>
<svg style="left:1199px;top:156px" width="12" height="5" viewBox="0 0 12 5" fill="#5c5c5c"><rect x="0" y="0" width="1.500" height="1.500"/><rect x="3" y="0" width="1.500" height="1.500"/><rect x="6" y="0" width="1.500" height="1.500"/><rect x="9" y="0" width="1.500" height="1.500"/><rect x="0" y="3" width="1.500" height="1.500"/><rect x="3" y="3" width="1.500" height="1.500"/><rect x="6" y="3" width="1.500" height="1.500"/><rect x="9" y="3" width="1.500" height="1.500"/></svg>
<div class="t" style="left:1041.500px;top:182.5px;color:#d8d8d8">Location:</div>
<div class="a" style="left:1041.500px;top:200.8px;width:126.5px;height:18px;background:#545454;border-radius:4px 4px 0 0"></div>
<div class="t" style="left:1057px;top:203.0px;color:#e6e6e6">X</div>
<div class="t r" style="left:1055.0px;width:100px;top:203.0px;color:#e6e6e6">0 m</div>
<svg style="left:1185.500px;top:202.3px" width="15" height="14" viewBox="0 0 15 14" fill="none" stroke="#d0d0d0" stroke-width="1.100"><path d="M1.200 6.500V4.300a2.700 2.700 0 0 1 5.400 0V6.500"/><rect x="5.200" y="6.500" width="8.600" height="6.300" rx="1"/><path d="M8.500 9.700h2" stroke-width="1.300"/></svg>
<div class="a" style="left:1041.500px;top:220.4px;width:126.5px;height:18px;background:#545454;border-radius:0"></div>
<div class="t" style="left:1057px;top:222.6px;color:#e6e6e6">Y</div>
<div class="t r" style="left:1055.0px;width:100px;top:222.6px;color:#e6e6e6">0 m</div>
<svg style="left:1185.500px;top:221.9px" width="15" height="14" viewBox="0 0 15 14" fill="none" stroke="#d0d0d0" stroke-width="1.100"><path d="M1.200 6.500V4.300a2.700 2.700 0 0 1 5.400 0V6.500"/><rect x="5.200" y="6.500" width="8.600" height="6.300" rx="1"/><path d="M8.500 9.700h2" stroke-width="1.300"/></svg>
<div class="a" style="left:1041.500px;top:240.2px;width:126.5px;height:18px;background:#545454;border-radius:0 0 4px 4px"></div>
<div class="t" style="left:1057px;top:242.4px;color:#e6e6e6">Z</div>
<div class="t r" style="left:1055.0px;width:100px;top:242.4px;color:#e6e6e6">-0.033694 m</div>
<svg style="left:1185.500px;top:241.7px" width="15" height="14" viewBox="0 0 15 14" fill="none" stroke="#d0d0d0" stroke-width="1.100"><path d="M1.200 6.500V4.300a2.700 2.700 0 0 1 5.400 0V6.500"/><rect x="5.200" y="6.500" width="8.600" height="6.300" rx="1"/><path d="M8.500 9.700h2" stroke-width="1.300"/></svg>
<div class="t" style="left:1041.500px;top:264.3px;color:#d8d8d8">Rotation:</div>
<div class="a" style="left:1041.500px;top:282.5px;width:126.5px;height:18px;background:#545454;border-radius:4px 4px 0 0"></div>
<div class="t" style="left:1057px;top:284.7px;color:#e6e6e6">X</div>
<div class="t r" style="left:1055.0px;width:100px;top:284.7px;color:#e6e6e6">0°</div>
<svg style="left:1185.500px;top:284.0px" width="15" height="14" viewBox="0 0 15 14" fill="none" stroke="#d0d0d0" stroke-width="1.100"><path d="M1.200 6.500V4.300a2.700 2.700 0 0 1 5.400 0V6.500"/><rect x="5.200" y="6.500" width="8.600" height="6.300" rx="1"/><path d="M8.500 9.700h2" stroke-width="1.300"/></svg>
<div class="a" style="left:1041.500px;top:302.2px;width:126.5px;height:18px;background:#545454;border-radius:0"></div>
<div class="t" style="left:1057px;top:304.4px;color:#e6e6e6">Y</div>
<div class="t r" style="left:1055.0px;width:100px;top:304.4px;color:#e6e6e6">0°</div>
<svg style="left:1185.500px;top:303.7px" width="15" height="14" viewBox="0 0 15 14" fill="none" stroke="#d0d0d0" stroke-width="1.100"><path d="M1.200 6.500V4.300a2.700 2.700 0 0 1 5.400 0V6.500"/><rect x="5.200" y="6.500" width="8.600" height="6.300" rx="1"/><path d="M8.500 9.700h2" stroke-width="1.300"/></svg>
<div class="a" style="left:1041.500px;top:322px;width:126.5px;height:18px;background:#545454;border-radius:0 0 4px 4px"></div>
<div class="t" style="left:1057px;top:324.2px;color:#e6e6e6">Z</div>
<div class="t r" style="left:1055.0px;width:100px;top:324.2px;color:#e6e6e6">0°</div>
<svg style="left:1185.500px;top:323.5px" width="15" height="14" viewBox="0 0 15 14" fill="none" stroke="#d0d0d0" stroke-width="1.100"><path d="M1.200 6.500V4.300a2.700 2.700 0 0 1 5.400 0V6.500"/><rect x="5.200" y="6.500" width="8.600" height="6.300" rx="1"/><path d="M8.500 9.700h2" stroke-width="1.300"/></svg>
<div class="a" style="left:1041.500px;top:344.500px;width:166.500px;height:17.500px;border-radius:4px;background:#282828;border:1px solid #333"></div>
<div class="t" style="left:1048.500px;top:346.300px;color:#e6e6e6">XYZ Euler</div>
<svg style="left:1197.500px;top:351.500px;color:#e0e0e0" width="7" height="4.500" viewBox="0 0 8 5" preserveAspectRatio="none"><path d="M0.7 0.7 L4 4 L7.3 0.7" fill="none" stroke="currentColor" stroke-width="1.3" stroke-linecap="round" stroke-linejoin="round"/></svg>
<div class="t" style="left:1041.500px;top:368.3px;color:#d8d8d8">Scale:</div>
<div class="a" style="left:1041.500px;top:386.7px;width:126.5px;height:18px;background:#545454;border-radius:4px 4px 0 0"></div>
<div class="t" style="left:1057px;top:388.9px;color:#e6e6e6">X</div>
<div class="t r" style="left:1055.0px;width:100px;top:388.9px;color:#e6e6e6">1.000</div>
<svg style="left:1185.500px;top:388.2px" width="15" height="14" viewBox="0 0 15 14" fill="none" stroke="#d0d0d0" stroke-width="1.100"><path d="M1.200 6.500V4.300a2.700 2.700 0 0 1 5.400 0V6.500"/><rect x="5.200" y="6.500" width="8.600" height="6.300" rx="1"/><path d="M8.500 9.700h2" stroke-width="1.300"/></svg>
<div class="a" style="left:1041.500px;top:406.2px;width:126.5px;height:18px;background:#545454;border-radius:0"></div>
<div class="t" style="left:1057px;top:408.4px;color:#e6e6e6">Y</div>
<div class="t r" style="left:1055.0px;width:100px;top:408.4px;color:#e6e6e6">1.000</div>
<svg style="left:1185.500px;top:407.7px" width="15" height="14" viewBox="0 0 15 14" fill="none" stroke="#d0d0d0" stroke-width="1.100"><path d="M1.200 6.500V4.300a2.700 2.700 0 0 1 5.400 0V6.500"/><rect x="5.200" y="6.500" width="8.600" height="6.300" rx="1"/><path d="M8.500 9.700h2" stroke-width="1.300"/></svg>
<div class="a" style="left:1041.500px;top:426px;width:126.5px;height:18px;background:#545454;border-radius:0 0 4px 4px"></div>
<div class="t" style="left:1057px;top:428.2px;color:#e6e6e6">Z</div>
<div class="t r" style="left:1055.0px;width:100px;top:428.2px;color:#e6e6e6">1.000</div>
<svg style="left:1185.500px;top:427.5px" width="15" height="14" viewBox="0 0 15 14" fill="none" stroke="#d0d0d0" stroke-width="1.100"><path d="M1.200 6.500V4.300a2.700 2.700 0 0 1 5.400 0V6.500"/><rect x="5.200" y="6.500" width="8.600" height="6.300" rx="1"/><path d="M8.500 9.700h2" stroke-width="1.300"/></svg>
<div class="t" style="left:1041.500px;top:450.3px;color:#d8d8d8">Dimensions:</div>
<div class="a" style="left:1041.500px;top:468.8px;width:166.5px;height:18px;background:#545454;border-radius:4px 4px 0 0"></div>
<div class="t" style="left:1057px;top:471.0px;color:#e6e6e6">X</div>
<div class="t r" style="left:1095.0px;width:100px;top:471.0px;color:#e6e6e6">2 m</div>
<div class="a" style="left:1041.500px;top:488.3px;width:166.5px;height:18px;background:#545454;border-radius:0"></div>
<div class="t" style="left:1057px;top:490.5px;color:#e6e6e6">Y</div>
<div class="t r" style="left:1095.0px;width:100px;top:490.5px;color:#e6e6e6">2 m</div>
<div class="a" style="left:1041.500px;top:508.2px;width:166.5px;height:18px;background:#545454;border-radius:0 0 4px 4px"></div>
<div class="t" style="left:1057px;top:510.4px;color:#e6e6e6">Z</div>
<div class="t r" style="left:1095.0px;width:100px;top:510.4px;color:#e6e6e6">0 m</div>
<div class="a" style="left:1225px;top:149px;width:17.500px;height:40px;background:#3d3d3d;border-radius:0 4px 4px 0"></div>
<div class="a" style="left:1225px;top:195.500px;width:17.500px;height:36.500px;background:#282828;border:1px solid #3a3a3a;border-left:none;border-radius:0 4px 4px 0"></div>
<div class="a" style="left:1225px;top:238.500px;width:17.500px;height:40px;background:#282828;border:1px solid #3a3a3a;border-left:none;border-radius:0 4px 4px 0"></div>
<div class="t" style="left:1183.500px;top:162px;width:100px;text-align:center;transform:rotate(-90deg);color:#f0f0f0">Item</div>
<div class="t" style="left:1183.500px;top:206.7px;width:100px;text-align:center;transform:rotate(-90deg);color:#d0d0d0">Tool</div>
<div class="t" style="left:1183.500px;top:251.5px;width:100px;text-align:center;transform:rotate(-90deg);color:#d0d0d0">View</div>

<!-- GIZMO + NAV -->
<svg style="left:930px;top:150px" width="90" height="90" viewBox="930 150 90 90">
<path d="M974.500 194.500V170" stroke="#7eb42c" stroke-width="2"/><path d="M974.500 194.500H998" stroke="#e0354e" stroke-width="2"/>
<path d="M974.500 194.500V219" stroke="#7eb42c" stroke-width="2"/><path d="M974.500 194.500H950" stroke="#e0354e" stroke-width="2"/>
<circle cx="942.300" cy="194.500" r="7.200" fill="#7a3743" stroke="#d8354c" stroke-width="1.200"/>
<circle cx="974.500" cy="226.200" r="7.200" fill="#50662c" stroke="#7eb42c" stroke-width="1.200"/>
<circle cx="974.500" cy="162.600" r="7.800" fill="#7eb42c"/>
<circle cx="1006.400" cy="194.500" r="7.800" fill="#e0354e"/>
<circle cx="974.500" cy="194.500" r="8.600" fill="#3a8cee"/>
<g font-family="DejaVu Sans,Liberation Sans,sans-serif" font-size="10.800" text-anchor="middle" fill="#111">
<text x="974.500" y="166.600">Y</text><text x="1006.400" y="198.500">X</text><text x="974.500" y="198.500">Z</text></g>
</svg>
<div class="a" style="left:988px;top:235.300px;width:28px;height:28px;border-radius:50%;background:#737373"></div>
<div class="a" style="left:988px;top:265.400px;width:28px;height:28px;border-radius:50%;background:#737373"></div>
<div class="a" style="left:988px;top:295.300px;width:28px;height:28px;border-radius:50%;background:#737373"></div>
<div class="a" style="left:988px;top:325.300px;width:28px;height:28px;border-radius:50%;background:#737373"></div>
<svg style="left:993px;top:240px" width="18" height="18" viewBox="0 0 18 18"><circle cx="10.800" cy="7" r="5.600" fill="#f4f4f4"/><path d="M6.800 11L1.800 16" stroke="#f4f4f4" stroke-width="2.200" stroke-linecap="round"/><path d="M10.800 4.400v5.200M8.200 7h5.200" stroke="#6e6e6e" stroke-width="1.200"/></svg>
<svg style="left:993px;top:270.500px" width="18" height="18" viewBox="0 0 18 18" fill="#f4f4f4"><path d="M5 9V3.600a1 1 0 0 1 2 0V8V2.200a1 1 0 0 1 2 0V8V2.600a1 1 0 0 1 2 0V8.400V4.400a1 1 0 0 1 2 0V11c0 3.500-2 5.500-4.800 5.500-2.200 0-3.400-1-4.600-3.200L1.400 9.600c-.5-1 .8-1.800 1.600-.9z"/></svg>
<svg style="left:992.500px;top:300.500px" width="19" height="17" viewBox="0 0 19 17" fill="#f4f4f4"><circle cx="5" cy="4" r="3.300"/><circle cx="11.600" cy="4" r="3.300"/><rect x="2.600" y="7.600" width="11" height="7.600" rx="1"/><path d="M13.800 10.600l4.200-2.400v6.600l-4.200-2.400z"/><circle cx="5" cy="4" r="1.100" fill="#6e6e6e"/><circle cx="11.600" cy="4" r="1.100" fill="#6e6e6e"/></svg>
<svg style="left:994px;top:331.500px" width="16" height="16" viewBox="0 0 16 16" fill="none" stroke="#f4f4f4" stroke-width="1.300"><rect x=".700" y=".700" width="14.600" height="14.600"/><path d="M5.600 .700v14.600M10.400 .700v14.600M.700 5.600h14.600M.700 10.400h14.600"/></svg>

<!-- OUTLINER -->
<div class="a" id="ol" style="left:1248px;top:93px;width:247px;height:207.500px;background:#282828;border-radius:5px;overflow:hidden">
<div class="a" style="left:0;top:20px;width:247px;height:20px;background:#282828"></div>
<div class="a" style="left:0;top:40px;width:247px;height:20px;background:#2b2b2b"></div>
<div class="a" style="left:0;top:60px;width:247px;height:20px;background:#282828"></div>
<div class="a" style="left:0;top:80px;width:247px;height:20px;background:#2b2b2b"></div>
<div class="a" style="left:0;top:99.5px;width:247px;height:81px;background:#1b3152"></div>
<div class="a" style="left:0;top:180px;width:247px;height:20px;background:#324c80"></div>
<div class="a" style="left:0;top:199.800px;width:247px;height:13px;background:#2d446f"></div>
<div class="a" style="left:28px;top:20px;width:1px;height:55px;background:#4a4a4a"></div>
<div class="a" style="left:28px;top:105px;width:1px;height:100px;background:#3d4f6c"></div>
<svg style="left:45.799999999999955px;top:26.7px" width="5.800" height="7.600" viewBox="0 0 6 8" preserveAspectRatio="none"><path d="M0 0.500L6 4L0 7.500z" fill="#c4c4c4"/></svg>
<svg style="left:62px;top:23.0px" width="14" height="14" viewBox="0 0 14 14" preserveAspectRatio="none"><path d="M1.600 1.500H12.400L7 12.300Z" fill="none" stroke="#d58d50" stroke-width="2.300" stroke-linejoin="round"/></svg>
<div class="t" style="left:83.3px;top:23.7px;color:#d6d6d6">Donut</div>
<svg style="left:45.799999999999955px;top:46.7px" width="5.800" height="7.600" viewBox="0 0 6 8" preserveAspectRatio="none"><path d="M0 0.500L6 4L0 7.500z" fill="#c4c4c4"/></svg>
<svg style="left:62px;top:43.0px" width="14" height="14" viewBox="0 0 14 14" preserveAspectRatio="none"><path d="M1.600 1.500H12.400L7 12.300Z" fill="none" stroke="#d58d50" stroke-width="2.300" stroke-linejoin="round"/></svg>
<div class="t" style="left:83.3px;top:43.7px;color:#d6d6d6">Icing</div>
<svg style="left:45.799999999999955px;top:66.7px" width="5.800" height="7.600" viewBox="0 0 6 8" preserveAspectRatio="none"><path d="M0 0.500L6 4L0 7.500z" fill="#c4c4c4"/></svg>
<svg style="left:62.5px;top:62.5px" width="13" height="16" viewBox="0 0 13 16"><path d="M6.500 .600a5.600 5.600 0 0 1 3.300 10.200v1.700H3.200v-1.700A5.600 5.600 0 0 1 6.500 .600z" fill="#e0904a"/><path d="M3.600 13.300h5.800v1.300l-1.200 1H4.800l-1.200-1z" fill="#a8662e"/><path d="M3.600 6.200l2 1M9.400 6.200l-2 1M4.800 9.800l.6-2.400M8.200 9.800l-.6-2.400" stroke="#282828" stroke-width="1.100" fill="none"/></svg>
<div class="t" style="left:83.3px;top:63.7px;color:#d6d6d6">Light</div>
<svg style="left:45.799999999999955px;top:106.7px" width="5.800" height="7.600" viewBox="0 0 6 8" preserveAspectRatio="none"><path d="M0 0.500L6 4L0 7.500z" fill="#c4c4c4"/></svg>
<svg style="left:62px;top:103.0px" width="14" height="14" viewBox="0 0 14 14" preserveAspectRatio="none"><path d="M1.600 1.500H12.400L7 12.300Z" fill="none" stroke="#d58d50" stroke-width="2.300" stroke-linejoin="round"/></svg>
<div class="t" style="left:83.3px;top:103.7px;color:#e47838">Curved Sprinkle</div>
<svg style="left:45.799999999999955px;top:126.7px" width="5.800" height="7.600" viewBox="0 0 6 8" preserveAspectRatio="none"><path d="M0 0.500L6 4L0 7.500z" fill="#c4c4c4"/></svg>
<svg style="left:62px;top:123.0px" width="14" height="14" viewBox="0 0 14 14" preserveAspectRatio="none"><path d="M1.600 1.500H12.400L7 12.300Z" fill="none" stroke="#d58d50" stroke-width="2.300" stroke-linejoin="round"/></svg>
<div class="t" style="left:83.3px;top:123.7px;color:#e47838">Long Sprinkle</div>
<svg style="left:45.799999999999955px;top:146.7px" width="5.800" height="7.600" viewBox="0 0 6 8" preserveAspectRatio="none"><path d="M0 0.500L6 4L0 7.500z" fill="#c4c4c4"/></svg>
<svg style="left:62px;top:143.0px" width="14" height="14" viewBox="0 0 14 14" preserveAspectRatio="none"><path d="M1.600 1.500H12.400L7 12.300Z" fill="none" stroke="#d58d50" stroke-width="2.300" stroke-linejoin="round"/></svg>
<div class="t" style="left:83.3px;top:143.7px;color:#e47838">Loopy Sprinkle</div>
<svg style="left:45.799999999999955px;top:166.7px" width="5.800" height="7.600" viewBox="0 0 6 8" preserveAspectRatio="none"><path d="M0 0.500L6 4L0 7.500z" fill="#c4c4c4"/></svg>
<svg style="left:62px;top:163.0px" width="14" height="14" viewBox="0 0 14 14" preserveAspectRatio="none"><path d="M1.600 1.500H12.400L7 12.300Z" fill="none" stroke="#d58d50" stroke-width="2.300" stroke-linejoin="round"/></svg>
<div class="t" style="left:83.3px;top:163.7px;color:#e47838">Mini Sprinkle</div>
<svg style="left:45.799999999999955px;top:186.7px" width="5.800" height="7.600" viewBox="0 0 6 8" preserveAspectRatio="none"><path d="M0 0.500L6 4L0 7.500z" fill="#c4c4c4"/></svg>
<div class="a" style="left:59.5px;top:181px;width:19px;height:18px;border-radius:4px;background:#5b6f99;border:1px solid #7b8db3"></div>
<svg style="left:62px;top:183.0px" width="14" height="14" viewBox="0 0 14 14" preserveAspectRatio="none"><path d="M1.600 1.500H12.400L7 12.300Z" fill="none" stroke="#d58d50" stroke-width="2.300" stroke-linejoin="round"/></svg>
<div class="t" style="left:83.3px;top:183.7px;color:#f2b257">Plane</div>
<svg style="left:25.6px;top:87.9px" width="6" height="6" viewBox="0 0 6 6"><path d="M0 0H6L3 6z" fill="#c4c4c4"/></svg>
<svg style="left:42px;top:83.8px" width="14" height="14" viewBox="0 0 14 14"><rect x=".300" y=".300" width="13.400" height="3.600" rx=".600" fill="#ececec"/><path d="M1.200 4.800h11.600v8.200a.8.800 0 0 1-.8.800H2a.8.800 0 0 1-.8-.8z" fill="#ececec"/><rect x="5" y="6.400" width="4" height="1.700" rx=".800" fill="#2b2b2b"/></svg>
<div class="t" style="left:63.3px;top:83.7px;color:#d6d6d6">Sprinkles</div>
<svg style="left:184px;top:85.0px" width="11" height="11" viewBox="0 0 11 11"><rect width="11" height="11" rx="1.500" fill="#f4f4f4"/><path d="M2.300 5.600l2.300 2.400 4.200-5" fill="none" stroke="#1a1a1a" stroke-width="1.700"/></svg>
<svg style="left:203.5px;top:25.0px" width="13.500" height="9.600" viewBox="0 0 14 10" preserveAspectRatio="none"><path d="M0.300 5C2.200 1.700 4.600 .400 7 .400S11.800 1.700 13.700 5C11.800 8.300 9.400 9.600 7 9.600S2.200 8.300 .300 5z" fill="#f2f2f2"/><circle cx="7" cy="5" r="3" fill="#222"/><circle cx="7" cy="5" r="1.500" fill="#f2f2f2"/></svg>
<svg style="left:223.0px;top:24.0px" width="14" height="12" viewBox="0 0 14 12" preserveAspectRatio="none"><path d="M1.300 2.400h2.500l1-1.700h4.400l1 1.700h2.500a1 1 0 0 1 1 1v7.200a1 1 0 0 1-1 1H1.300a1 1 0 0 1-1-1V3.400a1 1 0 0 1 1-1z" fill="#eee"/><circle cx="7" cy="6.800" r="3.300" fill="#222"/><circle cx="7" cy="6.800" r="2.400" fill="none" stroke="#eee" stroke-width="1"/><circle cx="7" cy="6.800" r="1" fill="#222"/></svg>
<svg style="left:203.5px;top:45.0px" width="13.500" height="9.600" viewBox="0 0 14 10" preserveAspectRatio="none"><path d="M0.300 5C2.200 1.700 4.600 .400 7 .400S11.800 1.700 13.700 5C11.800 8.300 9.400 9.600 7 9.600S2.200 8.300 .300 5z" fill="#f2f2f2"/><circle cx="7" cy="5" r="3" fill="#222"/><circle cx="7" cy="5" r="1.500" fill="#f2f2f2"/></svg>
<svg style="left:223.0px;top:44.0px" width="14" height="12" viewBox="0 0 14 12" preserveAspectRatio="none"><path d="M1.300 2.400h2.500l1-1.700h4.400l1 1.700h2.500a1 1 0 0 1 1 1v7.200a1 1 0 0 1-1 1H1.300a1 1 0 0 1-1-1V3.400a1 1 0 0 1 1-1z" fill="#eee"/><circle cx="7" cy="6.800" r="3.300" fill="#222"/><circle cx="7" cy="6.800" r="2.400" fill="none" stroke="#eee" stroke-width="1"/><circle cx="7" cy="6.800" r="1" fill="#222"/></svg>
<svg style="left:203.5px;top:65.0px" width="13.500" height="9.600" viewBox="0 0 14 10" preserveAspectRatio="none"><path d="M0.300 5C2.200 1.700 4.600 .400 7 .400S11.800 1.700 13.700 5C11.800 8.300 9.400 9.600 7 9.600S2.200 8.300 .300 5z" fill="#f2f2f2"/><circle cx="7" cy="5" r="3" fill="#222"/><circle cx="7" cy="5" r="1.500" fill="#f2f2f2"/></svg>
<svg style="left:223.0px;top:64.0px" width="14" height="12" viewBox="0 0 14 12" preserveAspectRatio="none"><path d="M1.300 2.400h2.500l1-1.700h4.400l1 1.700h2.500a1 1 0 0 1 1 1v7.200a1 1 0 0 1-1 1H1.300a1 1 0 0 1-1-1V3.400a1 1 0 0 1 1-1z" fill="#eee"/><circle cx="7" cy="6.800" r="3.300" fill="#222"/><circle cx="7" cy="6.800" r="2.400" fill="none" stroke="#eee" stroke-width="1"/><circle cx="7" cy="6.800" r="1" fill="#222"/></svg>
<svg style="left:203.5px;top:85.0px" width="13.500" height="9.600" viewBox="0 0 14 10" preserveAspectRatio="none"><path d="M0.300 5C2.200 1.700 4.600 .400 7 .400S11.800 1.700 13.700 5C11.800 8.300 9.400 9.600 7 9.600S2.200 8.300 .300 5z" fill="#f2f2f2"/><circle cx="7" cy="5" r="3" fill="#222"/><circle cx="7" cy="5" r="1.500" fill="#f2f2f2"/></svg>
<svg style="left:223.0px;top:84.0px" width="14" height="12" viewBox="0 0 14 12" preserveAspectRatio="none"><path d="M1.300 2.400h2.500l1-1.700h4.400l1 1.700h2.500a1 1 0 0 1 1 1v7.200a1 1 0 0 1-1 1H1.300a1 1 0 0 1-1-1V3.400a1 1 0 0 1 1-1z" fill="#eee"/><circle cx="7" cy="6.800" r="3.300" fill="#222"/><circle cx="7" cy="6.800" r="2.400" fill="none" stroke="#eee" stroke-width="1"/><circle cx="7" cy="6.800" r="1" fill="#222"/></svg>
<svg style="left:203.5px;top:105.0px" width="13.500" height="9.600" viewBox="0 0 14 10" preserveAspectRatio="none"><path d="M0.300 5C2.200 1.700 4.600 .400 7 .400S11.800 1.700 13.700 5C11.800 8.300 9.400 9.600 7 9.600S2.200 8.300 .300 5z" fill="#f2f2f2"/><circle cx="7" cy="5" r="3" fill="#222"/><circle cx="7" cy="5" r="1.500" fill="#f2f2f2"/></svg>
<svg style="left:223.0px;top:104.0px" width="14" height="12" viewBox="0 0 14 12" preserveAspectRatio="none"><path d="M1.300 2.400h2.500l1-1.700h4.400l1 1.700h2.500a1 1 0 0 1 1 1v7.200a1 1 0 0 1-1 1H1.300a1 1 0 0 1-1-1V3.400a1 1 0 0 1 1-1z" fill="#eee"/><circle cx="7" cy="6.800" r="3.300" fill="#222"/><circle cx="7" cy="6.800" r="2.400" fill="none" stroke="#eee" stroke-width="1"/><circle cx="7" cy="6.800" r="1" fill="#222"/></svg>
<svg style="left:203.5px;top:125.0px" width="13.500" height="9.600" viewBox="0 0 14 10" preserveAspectRatio="none"><path d="M0.300 5C2.200 1.700 4.600 .400 7 .400S11.800 1.700 13.700 5C11.800 8.300 9.400 9.600 7 9.600S2.200 8.300 .300 5z" fill="#f2f2f2"/><circle cx="7" cy="5" r="3" fill="#222"/><circle cx="7" cy="5" r="1.500" fill="#f2f2f2"/></svg>
<svg style="left:223.0px;top:124.0px" width="14" height="12" viewBox="0 0 14 12" preserveAspectRatio="none"><path d="M1.300 2.400h2.500l1-1.700h4.400l1 1.700h2.500a1 1 0 0 1 1 1v7.200a1 1 0 0 1-1 1H1.300a1 1 0 0 1-1-1V3.400a1 1 0 0 1 1-1z" fill="#eee"/><circle cx="7" cy="6.800" r="3.300" fill="#222"/><circle cx="7" cy="6.800" r="2.400" fill="none" stroke="#eee" stroke-width="1"/><circle cx="7" cy="6.800" r="1" fill="#222"/></svg>
<svg style="left:203.5px;top:145.0px" width="13.500" height="9.600" viewBox="0 0 14 10" preserveAspectRatio="none"><path d="M0.300 5C2.200 1.700 4.600 .400 7 .400S11.800 1.700 13.700 5C11.800 8.300 9.400 9.600 7 9.600S2.200 8.300 .300 5z" fill="#f2f2f2"/><circle cx="7" cy="5" r="3" fill="#222"/><circle cx="7" cy="5" r="1.500" fill="#f2f2f2"/></svg>
<svg style="left:223.0px;top:144.0px" width="14" height="12" viewBox="0 0 14 12" preserveAspectRatio="none"><path d="M1.300 2.400h2.500l1-1.700h4.400l1 1.700h2.500a1 1 0 0 1 1 1v7.200a1 1 0 0 1-1 1H1.300a1 1 0 0 1-1-1V3.400a1 1 0 0 1 1-1z" fill="#eee"/><circle cx="7" cy="6.800" r="3.300" fill="#222"/><circle cx="7" cy="6.800" r="2.400" fill="none" stroke="#eee" stroke-width="1"/><circle cx="7" cy="6.800" r="1" fill="#222"/></svg>
<svg style="left:203.5px;top:165.0px" width="13.500" height="9.600" viewBox="0 0 14 10" preserveAspectRatio="none"><path d="M0.300 5C2.200 1.700 4.600 .400 7 .400S11.800 1.700 13.700 5C11.800 8.300 9.400 9.600 7 9.600S2.200 8.300 .300 5z" fill="#f2f2f2"/><circle cx="7" cy="5" r="3" fill="#222"/><circle cx="7" cy="5" r="1.500" fill="#f2f2f2"/></svg>
<svg style="left:223.0px;top:164.0px" width="14" height="12" viewBox="0 0 14 12" preserveAspectRatio="none"><path d="M1.300 2.400h2.500l1-1.700h4.400l1 1.700h2.500a1 1 0 0 1 1 1v7.200a1 1 0 0 1-1 1H1.300a1 1 0 0 1-1-1V3.400a1 1 0 0 1 1-1z" fill="#eee"/><circle cx="7" cy="6.800" r="3.300" fill="#222"/><circle cx="7" cy="6.800" r="2.400" fill="none" stroke="#eee" stroke-width="1"/><circle cx="7" cy="6.800" r="1" fill="#222"/></svg>
<svg style="left:203.5px;top:185.0px" width="13.500" height="9.600" viewBox="0 0 14 10" preserveAspectRatio="none"><path d="M0.300 5C2.200 1.700 4.600 .400 7 .400S11.800 1.700 13.700 5C11.800 8.300 9.400 9.600 7 9.600S2.200 8.300 .300 5z" fill="#f2f2f2"/><circle cx="7" cy="5" r="3" fill="#222"/><circle cx="7" cy="5" r="1.500" fill="#f2f2f2"/></svg>
<svg style="left:223.0px;top:184.0px" width="14" height="12" viewBox="0 0 14 12" preserveAspectRatio="none"><path d="M1.300 2.400h2.500l1-1.700h4.400l1 1.700h2.500a1 1 0 0 1 1 1v7.200a1 1 0 0 1-1 1H1.300a1 1 0 0 1-1-1V3.400a1 1 0 0 1 1-1z" fill="#eee"/><circle cx="7" cy="6.800" r="3.300" fill="#222"/><circle cx="7" cy="6.800" r="2.400" fill="none" stroke="#eee" stroke-width="1"/><circle cx="7" cy="6.800" r="1" fill="#222"/></svg>
<svg style="left:203.5px;top:205.0px" width="13.500" height="9.600" viewBox="0 0 14 10" preserveAspectRatio="none"><path d="M0.300 5C2.200 1.700 4.600 .400 7 .400S11.800 1.700 13.700 5C11.800 8.300 9.400 9.600 7 9.600S2.200 8.300 .300 5z" fill="#f2f2f2"/><circle cx="7" cy="5" r="3" fill="#222"/><circle cx="7" cy="5" r="1.500" fill="#f2f2f2"/></svg>
<svg style="left:223.0px;top:204.0px" width="14" height="12" viewBox="0 0 14 12" preserveAspectRatio="none"><path d="M1.300 2.400h2.500l1-1.700h4.400l1 1.700h2.500a1 1 0 0 1 1 1v7.200a1 1 0 0 1-1 1H1.300a1 1 0 0 1-1-1V3.400a1 1 0 0 1 1-1z" fill="#eee"/><circle cx="7" cy="6.800" r="3.300" fill="#222"/><circle cx="7" cy="6.800" r="2.400" fill="none" stroke="#eee" stroke-width="1"/><circle cx="7" cy="6.800" r="1" fill="#222"/></svg>
<svg style="left:137px;top:23.5px" width="13" height="13" viewBox="0 0 14 14" preserveAspectRatio="none"><path d="M1.500 12.500c-.9-.9-.6-1.800 0-2.400L6.200 5.600C5.600 3.400 7 1 9.800 1.100L8.200 3.200l.6 2 2 .6 2.100-1.600c.1 2.800-2.300 4.200-4.500 3.600L3.900 12.500c-.6.600-1.500.9-2.400 0z" fill="none" stroke="#5b86d6" stroke-width="1.200" stroke-linejoin="round"/></svg>
<svg style="left:158px;top:24.5px" width="13" height="13" viewBox="0 0 13 13" fill="none" stroke="#3fb58a" stroke-width="1.100"><path d="M1.500 1.500L6.500 11L11.500 1.500"/><circle cx="6.500" cy="10.800" r="1.400" fill="#282828"/></svg>
<svg style="left:131px;top:43.5px" width="14" height="14" viewBox="0 0 14 14" preserveAspectRatio="none"><path d="M1.500 12.500c-.9-.9-.6-1.800 0-2.400L6.200 5.600C5.600 3.400 7 1 9.800 1.100L8.200 3.200l.6 2 2 .6 2.100-1.600c.1 2.800-2.300 4.200-4.500 3.600L3.900 12.500c-.6.600-1.500.9-2.400 0z" fill="none" stroke="#5b86d6" stroke-width="1.200" stroke-linejoin="round"/></svg>
<svg style="left:151px;top:43.5px" width="14" height="14" viewBox="0 0 14 14" fill="#b0b0b0"><rect x="0" y="4" width="3" height="3"/><rect x="0" y="8" width="3" height="3"/><rect x="4" y="2" width="3.400" height="3"/><rect x="4" y="6" width="3.400" height="3"/><rect x="4" y="10" width="3.400" height="3"/><rect x="9" y="4" width="3" height="3" fill="none" stroke="#b0b0b0" stroke-width=".800"/><rect x="9" y="8.500" width="3" height="3" fill="none" stroke="#b0b0b0" stroke-width=".800"/><rect x="5.500" y="0" width="2.500" height="1.500" fill="none" stroke="#b0b0b0" stroke-width=".600"/></svg>
<svg style="left:170px;top:42.5px" width="10" height="15" viewBox="0 0 10 15" fill="none" stroke="#3fb58a" stroke-width="1.100"><circle cx="2.500" cy="2.500" r="1.700"/><path d="M4.200 2.500H9M3.300 4l3 7.500M6.300 9.500v4H9"/></svg>
<svg style="left:131.5px;top:63.0px" width="14" height="16" viewBox="0 0 14 16" fill="none" stroke="#3fb58a" stroke-width="1.100"><circle cx="7" cy="7" r="6.200"/><circle cx="7" cy="7.500" r="1.200" fill="#3fb58a"/><path d="M7 8.500V11" /><path d="M7 12v3.500" stroke-dasharray="1.200 1"/></svg>
<svg style="left:177px;top:134.5px" width="3" height="6" viewBox="0 0 3 6"><path d="M2.500 .500C.8 1.500 .8 4 2.500 5.500" fill="none" stroke="#4f7fd6" stroke-width="1.100"/></svg>
<svg style="left:172.5px;top:163.5px" width="8" height="14" viewBox="0 0 8 14"><path d="M5.500 .500C5.500 4 3.500 4.500 2 7.500S2 13 4.500 12.500S7 9.500 5.500 8.500" fill="none" stroke="#4f7fd6" stroke-width="1.200"/></svg>
<svg style="left:135px;top:183.0px" width="15" height="15" viewBox="0 0 15 15" fill="none" stroke="#3fc08f" stroke-width="1.200"><path d="M2.500 2.500H12.500L7.500 12.500Z"/><circle cx="2.500" cy="2.500" r="1.600" fill="#324c80"/><circle cx="12.500" cy="2.500" r="1.600" fill="#324c80"/><circle cx="7.500" cy="12.500" r="1.600" fill="#324c80"/></svg>

<div class="a" style="left:7.200px;top:200.400px;width:194.500px;height:6.200px;border-radius:3.100px;background:#575757"></div><div class="a" style="left:203px;top:200.400px;width:36px;height:6.200px;border-radius:0 3.100px 3.100px 0;background:#2a3c60"></div>
<div class="a" style="left:0;top:0;width:247px;height:25.500px;background:#303030"></div>
</div>
<div class="btn" style="left:1254.500px;top:96.500px;width:32px;height:19px"></div>
<svg style="left:1259px;top:98.500px" width="15" height="15" viewBox="0 0 15 15"><g fill="#e2e2e2"><rect x=".500" y="1" width="6" height="3"/><rect x="6.500" y="6" width="8" height="3"/><rect x="6.500" y="11" width="8" height="3"/></g><path d="M2.500 4V12.500H6M2.500 7.500H6" fill="none" stroke="#e2e2e2" stroke-width="1"/></svg>
<svg style="left:1276px;top:104.500px;color:#e0e0e0" width="7" height="4.500" viewBox="0 0 8 5" preserveAspectRatio="none"><path d="M0.7 0.7 L4 4 L7.3 0.7" fill="none" stroke="currentColor" stroke-width="1.3" stroke-linecap="round" stroke-linejoin="round"/></svg>
<div class="btn" style="left:1292px;top:96.500px;width:31px;height:19px"></div>
<svg style="left:1296px;top:98px" width="16" height="16" viewBox="0 0 16 16"><path d="M1 5v10h10" fill="none" stroke="#bdbdbd" stroke-width="1"/><path d="M2.600 3.600v10h10" fill="none" stroke="#d0d0d0" stroke-width="1"/><rect x="4.200" y="1.400" width="10.600" height="10.600" rx="1" fill="#e6e6e6"/><path d="M5.600 10.400l3-4.600 2.200 3 1.200-1.400 1.600 3z" fill="#2a2a2a"/><circle cx="12" cy="4.300" r="1.200" fill="#2a2a2a"/></svg>
<svg style="left:1313px;top:104.500px;color:#e0e0e0" width="7" height="4.500" viewBox="0 0 8 5" preserveAspectRatio="none"><path d="M0.7 0.7 L4 4 L7.3 0.7" fill="none" stroke="currentColor" stroke-width="1.3" stroke-linecap="round" stroke-linejoin="round"/></svg>
<div class="a" style="left:1340.500px;top:96.500px;width:115px;height:19px;border:1px solid #3a3a3a;border-radius:4px;background:#1d1d1d"></div>
<svg style="left:1344px;top:98.500px" width="14" height="14" viewBox="0 0 14 14" fill="none" stroke="#e0e0e0" stroke-width="1.300"><circle cx="8.400" cy="5.400" r="4.200"/><path d="M5.600 8.400L1 13" stroke-linecap="round"/></svg>
<div class="btn" style="left:1472px;top:96.500px;width:30px;height:19px"></div>
<svg style="left:1476px;top:98.500px" width="15" height="15" viewBox="0 0 15 15"><path d="M.800 1H14.200L9 7.800V12.500L6 14.500V7.800Z" fill="none" stroke="#eaeaea" stroke-width="1.300" stroke-linejoin="round"/></svg>

<!-- PROPERTIES -->
<div class="a" id="pr" style="left:1248px;top:304.500px;width:247px;height:526px;background:#303030;border-radius:5px;overflow:hidden">
<div class="a" style="left:0;top:25px;width:27.500px;height:502px;background:#1d1d1d"></div>
<div class="a" style="left:1.500px;top:281.500px;width:26px;height:26.500px;background:#303030;border-radius:4px 0 0 4px"></div>
<div class="a" style="left:4px;top:62px;width:23.500px;height:1px;background:#262626"></div>
<div class="a" style="left:4px;top:210px;width:23.500px;height:1px;background:#262626"></div>
<div class="a" style="left:4px;top:449px;width:23.500px;height:1px;background:#262626"></div>
<div class="a" style="left:4px;top:485px;width:23.500px;height:1px;background:#262626"></div>
</div>
<div class="btn" style="left:1256px;top:307px;width:31px;height:19px"></div>
<svg style="left:1260px;top:309.500px" width="14" height="14" viewBox="0 0 14 14"><rect x=".600" y=".600" width="12.800" height="5.600" rx="2.800" fill="#ececec"/><rect x=".600" y="7.800" width="12.800" height="5.600" rx="2.800" fill="#ececec"/><rect x="7.500" y="1.800" width="4.600" height="3.200" rx="1.600" fill="#282828"/><rect x="1.900" y="9" width="4.600" height="3.200" rx="1.600" fill="#282828"/></svg>
<svg style="left:1277px;top:315px;color:#e0e0e0" width="7" height="4.500" viewBox="0 0 8 5" preserveAspectRatio="none"><path d="M0.7 0.7 L4 4 L7.3 0.7" fill="none" stroke="currentColor" stroke-width="1.3" stroke-linecap="round" stroke-linejoin="round"/></svg>
<div class="a" style="left:1314.500px;top:307px;width:116px;height:19px;border:1px solid #3a3a3a;border-radius:4px;background:#1d1d1d"></div>
<svg style="left:1318px;top:309px" width="14" height="14" viewBox="0 0 14 14" fill="none" stroke="#e0e0e0" stroke-width="1.300"><circle cx="8.400" cy="5.400" r="4.200"/><path d="M5.600 8.400L1 13" stroke-linecap="round"/></svg>
<div class="btn" style="left:1468px;top:307px;width:19.500px;height:19px"></div>
<svg style="left:1474px;top:315px;color:#e0e0e0" width="7" height="4.500" viewBox="0 0 8 5" preserveAspectRatio="none"><path d="M0.7 0.7 L4 4 L7.3 0.7" fill="none" stroke="currentColor" stroke-width="1.3" stroke-linecap="round" stroke-linejoin="round"/></svg>
<!-- tab icons -->
<svg style="left:1255px;top:343px" width="16" height="16" viewBox="0 0 16 16"><g fill="#dcdcdc"><path d="M3.500 1h1.600v6.500h1v5.700c0 1.400-3.600 1.400-3.600 0V7.500h1z"/><path d="M9.200 1v3.300c0 1 .8 1.600 1.600 1.900V14.500h1.900V6.200c.8-.3 1.600-.9 1.600-1.900V1h-1.300v3h-.9V1h-.8v3h-.8V1z"/></g></svg>
<svg style="left:1255px;top:379px" width="16" height="16" viewBox="0 0 16 16"><path d="M1.500 5.500h11.500v9H1.500z" fill="none" stroke="#dcdcdc" stroke-width="1.400"/><path d="M4 5V2.500h6.500V5" fill="none" stroke="#dcdcdc" stroke-width="1.200"/><path d="M13.500 7.500h1.500v5h-1.500z" fill="#dcdcdc"/><circle cx="11.500" cy="3.500" r=".800" fill="#dcdcdc"/></svg>
<svg style="left:1255px;top:408px" width="16" height="16" viewBox="0 0 16 16"><path d="M1 1h14v5.500H1z" fill="#dcdcdc"/><path d="M3.500 6.500v8h9v-8" fill="none" stroke="#dcdcdc" stroke-width="1.300"/><path d="M5 13l2.200-3.200 1.500 1.800.9-.9 1.400 2.300z" fill="#dcdcdc"/><circle cx="10.400" cy="8.600" r=".900" fill="#dcdcdc"/></svg>
<svg style="left:1255px;top:435.500px" width="16" height="16" viewBox="0 0 16 16"><path d="M1 5v10h10" fill="none" stroke="#9d9d9d" stroke-width="1"/><path d="M2.600 3.600v10h10" fill="none" stroke="#b8b8b8" stroke-width="1"/><rect x="4.200" y="1.400" width="10.600" height="10.600" rx="1" fill="#d8d8d8"/><path d="M5.600 10.400l3-4.600 2.200 3 1.200-1.400 1.600 3z" fill="#1d1d1d"/><circle cx="12" cy="4.300" r="1.200" fill="#1d1d1d"/></svg>
<svg style="left:1255px;top:463px" width="16" height="16" viewBox="0 0 16 16"><path d="M4.200 1 L7.400 11 H1 Z" fill="#cfcfcf"/><circle cx="11.800" cy="3" r="1.800" fill="#ececec"/><circle cx="10.600" cy="10.600" r="3.400" fill="#1d1d1d" stroke="#dcdcdc" stroke-width="1.200"/><path d="M9 9a2.300 2.300 0 0 1 2.400-.6" stroke="#dcdcdc" stroke-width=".900" fill="none"/></svg>
<svg style="left:1255px;top:491.500px" width="16" height="16" viewBox="0 0 16 16"><circle cx="8" cy="8" r="6.300" fill="none" stroke="#d65e6e" stroke-width="1.300"/><path d="M4.500 5.500c1.500-.8 3-.5 4 .3s2.600.5 2.400 2-1.700 1.500-2.400 2.800-1.400 1.800-2.300.8.300-2.200-.7-3-1.600-1.900-1-2.900z" fill="#d65e6e"/><path d="M3 14L14 2.500" stroke="#d65e6e" stroke-width="1"/></svg>
<svg style="left:1255.500px;top:529px" width="15" height="15" viewBox="0 0 15 15"><rect x=".700" y=".700" width="13.600" height="3.400" rx=".600" fill="none" stroke="#dcdcdc" stroke-width="1.300"/><path d="M1.800 4.200v9.300h11.400V4.200" fill="none" stroke="#dcdcdc" stroke-width="1.300"/><rect x="5.200" y="6.400" width="4.600" height="1.800" rx=".900" fill="#dcdcdc"/></svg>
<svg style="left:1255px;top:564px" width="15" height="15" viewBox="0 0 15 15"><path d="M1 4V1H4M11 1H14V4M14 11V14H11M4 14H1V11" fill="none" stroke="#b5763a" stroke-width="1.100"/><rect x="3.300" y="3.300" width="8.400" height="8.400" rx=".800" fill="#e0904a"/></svg>
<svg style="left:1254.500px;top:591px" width="16" height="16" viewBox="0 0 16 16"><path d="M1.800 14.200c-1-1-.7-2 0-2.700L6.800 6.400C6.100 3.900 7.800 1.200 11 1.300L9.200 3.700l.7 2.300 2.300.7 2.400-1.800c.1 3.200-2.600 4.800-5.100 4.100L4.500 14.200c-.7.700-1.700 1-2.700 0z" fill="#5b8ff0"/></svg>
<svg style="left:1255px;top:619.500px" width="16" height="16" viewBox="0 0 16 16"><g stroke="#5b86d6" stroke-width="1.100" fill="none"><path d="M3 3V13M3 3H13M3 3L13 13"/></g><g fill="#5b86d6"><circle cx="3" cy="3" r="2.100"/><circle cx="13" cy="3" r="1.500"/><circle cx="3" cy="13" r="1.500"/><circle cx="13" cy="13" r="1.500"/></g></svg>
<svg style="left:1255px;top:647.500px" width="16" height="16" viewBox="0 0 16 16"><path d="M11 3.200A6.200 6.200 0 1 0 13.800 8" fill="none" stroke="#5b86d6" stroke-width="1.300"/><circle cx="7.600" cy="8.200" r="2.700" fill="#5b86d6"/><circle cx="13" cy="3.300" r="1.600" fill="#5b86d6"/></svg>
<svg style="left:1255px;top:675.500px" width="16" height="16" viewBox="0 0 16 16" fill="none" stroke="#5b86d6" stroke-width="1.300"><path d="M10.500 1.600c1.800-.9 4 .6 3.800 2.800-.3 3-3.200 6.200-6 8.300-2.600 2-5.800 1.400-6.900-1.200-1-2.600.4-5 3-6.300z"/><circle cx="6" cy="9.800" r="2.300"/><circle cx="11.400" cy="4.600" r="1"/></svg>
<svg style="left:1255px;top:703.500px" width="16" height="16" viewBox="0 0 16 16" fill="none" stroke="#3fb58a" stroke-width="1.300"><path d="M2.500 2.700H13.500L8 13.500Z"/><circle cx="2.500" cy="2.700" r="1.700" fill="#1d1d1d"/><circle cx="13.500" cy="2.700" r="1.700" fill="#1d1d1d"/><circle cx="8" cy="13.500" r="1.700" fill="#1d1d1d"/></svg>
<svg style="left:1255px;top:731.500px" width="16" height="16" viewBox="0 0 16 16"><circle cx="8" cy="8" r="6.800" fill="#d65e6e"/><path d="M8 8V1.200A6.800 6.800 0 0 1 14.800 8z" fill="#1d1d1d"/><path d="M8 8V14.800A6.800 6.800 0 0 1 1.200 8z" fill="#1d1d1d"/><circle cx="8" cy="8" r="6.800" fill="none" stroke="#d65e6e" stroke-width="1.100"/></svg>
<svg style="left:1255.500px;top:767.500px" width="15" height="15" viewBox="0 0 15 15"><rect width="15" height="15" rx="1" fill="#d65e6e"/><g fill="#1d1d1d"><rect x="3" y="0" width="3" height="3"/><rect x="9" y="0" width="3" height="3"/><rect x="0" y="3" width="3" height="3"/><rect x="6" y="3" width="3" height="3"/><rect x="12" y="3" width="3" height="3"/><rect x="3" y="6" width="3" height="3"/><rect x="9" y="6" width="3" height="3"/><rect x="0" y="9" width="3" height="3"/><rect x="6" y="9" width="3" height="3"/><rect x="12" y="9" width="3" height="3"/><rect x="3" y="12" width="3" height="3"/><rect x="9" y="12" width="3" height="3"/></g></svg>
<!-- content -->
<svg style="left:1286.500px;top:340px" width="14" height="14" viewBox="0 0 15 15"><path d="M1 4V1H4M11 1H14V4M14 11V14H11M4 14H1V11" fill="none" stroke="#c8c8c8" stroke-width="1.100"/><rect x="3.300" y="3.300" width="8.400" height="8.400" rx=".800" fill="#ececec"/></svg>
<div class="t" style="left:1309.500px;top:340.200px;color:#e0e0e0">Plane</div>
<svg style="left:1470px;top:339.500px" width="15" height="15" viewBox="0 0 15 15" fill="none" stroke="#a0a0a0" stroke-width="1.100" stroke-linejoin="round"><path d="M9 1l5 5-1.500.5-2.500 2.500-.3 3-5.200-5.200 3-.3 2.500-2.500z"/><path d="M6 9L1 14"/></svg>
<div class="btn" style="left:1284px;top:374.500px;width:203.500px;height:18px"></div>
<div class="t" style="left:1292px;top:376.400px;color:#e0e0e0">Add Modifier</div>
<svg style="left:1477px;top:381.500px;color:#e0e0e0" width="7" height="4.500" viewBox="0 0 8 5" preserveAspectRatio="none"><path d="M0.7 0.7 L4 4 L7.3 0.7" fill="none" stroke="currentColor" stroke-width="1.3" stroke-linecap="round" stroke-linejoin="round"/></svg>
<!-- annotation -->
<svg style="left:1290px;top:205px" width="20" height="255" viewBox="1290 205 20 255"><path d="M1300.200 210L1297.500 454.300" stroke="#e8452b" stroke-width="2.500" fill="none"/></svg>
<svg style="left:1295.200px;top:202.600px" width="10" height="9.800" viewBox="0 0 10 9.800"><path d="M5 0L10 9.800H0z" fill="#ee4527"/></svg>
<div class="t" style="left:1291px;top:468.500px;font-family:'Liberation Sans',sans-serif;font-stretch:normal;font-weight:bold;font-size:19px;line-height:22.200px;color:#f0472b;white-space:normal;width:140px">Our new collection will now show up here</div>

<!-- NODE EDITOR -->
<div class="a" id="ne" style="left:57px;top:547px;width:1188px;height:283.500px;background:#1d1d1d;border-radius:5px;overflow:hidden">
<div class="a" style="left:0;top:27px;width:1188px;height:257px;background-image:radial-gradient(circle,#2f2f2f 0,#2f2f2f 1px,rgba(47,47,47,0) 1.800px);background-size:28.550px 28.550px;background-position:-3.18px -24.87px"></div>
<svg style="left:0;top:0" width="1188" height="284" viewBox="57 547 1188 284" fill="none">
<path d="M489.500 723.800 C747 723.800 747.500 631.700 1005 631.700" stroke="#111" stroke-width="3.6" opacity=".6"/>
<path d="M489.500 723.800 C747 723.800 747.500 631.700 1005 631.700" stroke="#3fd4a0" stroke-width="2.0"/>
<path d="M540 558 C585 585 598 600 628 600" stroke="#111" stroke-width="3.6" opacity=".6"/>
<path d="M540 558 C585 585 598 600 628 600" stroke="#3fd4a0" stroke-width="2.0"/>
<path d="M870 560 C930 590 950 600 1005 600" stroke="#111" stroke-width="3.6" opacity=".6"/>
<path d="M870 560 C930 590 950 600 1005 600" stroke="#3fd4a0" stroke-width="2.0"/>
<path d="M1104.300 582.600 C1116 582.600 1118 578 1125 568" stroke="#111" stroke-width="3.6" opacity=".6"/>
<path d="M1104.300 582.600 C1116 582.600 1118 578 1125 568" stroke="#3fd4a0" stroke-width="2.0"/>
<path d="M438 555 C450 580 452 601.700 464.800 601.700" stroke="#111" stroke-width="3.6" opacity=".6"/>
<path d="M438 555 C450 580 452 601.700 464.800 601.700" stroke="#a2a2a2" stroke-width="2.0"/>
<path d="M582 560 C600 600 605 647.200 628 647.200" stroke="#111" stroke-width="3.6" opacity=".6"/>
<path d="M582 560 C600 600 605 647.200 628 647.200" stroke="#a2a2a2" stroke-width="2.0"/>
<path d="M564.700 627 C590 650 600 662.700 628 662.700" stroke="#a8a8a8" stroke-width="1.1" stroke-dasharray="2.500 1.500"/>
<path d="M704.200 729 C765 729 765 703.300 827.400 703.300" stroke="#6464c8" stroke-width="1.2" stroke-dasharray="2.600 1.400"/>
<path d="M760 560 C790 620 795 687.400 827.400 687.400" stroke="#6464c8" stroke-width="1.2" stroke-dasharray="2.600 1.400"/>
<path d="M926.300 630 C966 630 966 678.500 1005 678.500" stroke="#6464c8" stroke-width="1.2" stroke-dasharray="2.600 1.400"/>
</svg>
<div class="a" style="left:408.8px;top:13px;width:98.9px;height:69.1px;background:#303030;border-radius:0 0 4px 4px;box-shadow:0 2px 5px rgba(0,0,0,.55),0 0 0 .700px #151515"></div>
<div class="a" style="left:415.60px;top:31.80px;width:9.400px;height:9.400px;background:#555;border-radius:2px;border:.600px solid #3d3d3d"></div>
<div class="t n" style="left:427.6px;top:32.00px;color:#e2e2e2">Clamp</div>
<div class="t n" style="left:416px;top:50.10px;color:#e2e2e2">Value</div>
<div class="a" style="left:404.2px;top:51.1px;width:7.200px;height:7.200px;border-radius:50%;background:#a1a1a1;border:.800px solid #161616"></div>
<div class="a" style="left:415.7px;top:64.6px;width:84.7px;height:12.6px;background:#545454;border-radius:3px"></div>
<div class="t n" style="left:426.2px;top:66.30px;color:#e2e2e2">Valu</div>
<div class="t n r" style="left:370px;width:120px;top:66.30px;color:#e2e2e2">10000.000</div>
<div class="a" style="left:404.2px;top:66.6px;width:7.200px;height:7.200px;border-radius:50%;background:#a1a1a1;border:.800px solid #161616"></div>
<div class="a" style="left:572px;top:13px;width:120.4px;height:129.1px;background:#303030;border-radius:0 0 4px 4px;box-shadow:0 2px 5px rgba(0,0,0,.55),0 0 0 .700px #151515"></div>
<div class="a" style="left:579.200px;top:28.600px;width:105.600px;height:12.800px;background:#282828;border:.700px solid #444;border-radius:3px"></div>
<div class="t n" style="left:583.6px;top:30.40px;color:#e2e2e2">Poisson Disk</div>
<svg style="left:677px;top:33.5px;color:#e0e0e0" width="5.500" height="3.500" viewBox="0 0 8 5" preserveAspectRatio="none"><path d="M0.7 0.7 L4 4 L7.3 0.7" fill="none" stroke="currentColor" stroke-width="1.3" stroke-linecap="round" stroke-linejoin="round"/></svg>
<div class="t n" style="left:579.6px;top:48.40px;color:#e2e2e2">Mesh</div>
<div class="a" style="left:567.4px;top:49.4px;width:7.200px;height:7.200px;border-radius:50%;background:#46d6a0;border:.800px solid #161616"></div>
<div class="t n" style="left:579.6px;top:64.00px;color:#e2e2e2">Selection</div>
<div class="a" style="left:567.60px;top:65.20px;width:6.800px;height:6.800px;transform:rotate(45deg);background:#cca6d6;border:.800px solid #161616"></div>
<div class="a" style="left:570.05px;top:67.65px;width:1.900px;height:1.900px;transform:rotate(45deg);background:#1d1d1d"></div>
<div class="a" style="left:579.6px;top:78.1px;width:105.2px;height:12.2px;background:#545454;border-radius:3px"></div>
<div class="t n" style="left:589.5px;top:79.60px;color:#e2e2e2">Distance Mi</div>
<div class="t n r" style="left:555px;width:120px;top:79.60px;color:#e2e2e2">0.003 m</div>
<div class="a" style="left:567.4px;top:80.6px;width:7.200px;height:7.200px;border-radius:50%;background:#a1a1a1;border:.800px solid #161616"></div>
<div class="t n" style="left:579.6px;top:95.60px;color:#e2e2e2">Density Max</div>
<div class="a" style="left:567.4px;top:96.6px;width:7.200px;height:7.200px;border-radius:50%;background:#a1a1a1;border:.800px solid #161616"></div>
<div class="t n" style="left:579.6px;top:111.10px;color:#e2e2e2">Density Factor</div>
<div class="a" style="left:567.60px;top:112.30px;width:6.800px;height:6.800px;transform:rotate(45deg);background:#a1a1a1;border:.800px solid #161616"></div>
<div class="a" style="left:579.6px;top:125.6px;width:105.2px;height:12.2px;background:#545454;border-radius:3px"></div>
<div class="t n" style="left:589.5px;top:127.10px;color:#e2e2e2">Seed</div>
<div class="t n r" style="left:555px;width:120px;top:127.10px;color:#e2e2e2">0</div>
<div class="a" style="left:567.4px;top:128.0px;width:7.200px;height:7.200px;border-radius:50%;background:#598c5c;border:.800px solid #161616"></div>
<div class="a" style="left:332.9px;top:105.2px;width:99.6px;height:137.5px;background:#303030;border-radius:4px;box-shadow:0 2px 5px rgba(0,0,0,.55),0 0 0 .700px #151515"></div>
<div class="a" style="left:332.9px;top:105.2px;width:99.6px;height:13.8px;background:#8c2f48;border-radius:4px 4px 0 0"></div>
<svg style="left:340.4px;top:110.3px;color:#e6e6e6" width="6.500" height="4" viewBox="0 0 8 5" preserveAspectRatio="none"><path d="M0.7 0.7 L4 4 L7.3 0.7" fill="none" stroke="currentColor" stroke-width="1.3" stroke-linecap="round" stroke-linejoin="round"/></svg>
<div class="t n" style="left:350.9px;top:107.50px">Object Info</div>
<div class="t n r" style="left:303.9px;width:120px;top:125.00px;color:#e2e2e2">Location</div>
<div class="a" style="left:428.9px;top:126.0px;width:7.200px;height:7.200px;border-radius:50%;background:#6363c7;border:.800px solid #161616"></div>
<div class="t n r" style="left:303.9px;width:120px;top:140.80px;color:#e2e2e2">Rotation</div>
<div class="a" style="left:428.9px;top:141.8px;width:7.200px;height:7.200px;border-radius:50%;background:#6363c7;border:.800px solid #161616"></div>
<div class="t n r" style="left:303.9px;width:120px;top:156.30px;color:#e2e2e2">Scale</div>
<div class="a" style="left:428.9px;top:157.3px;width:7.200px;height:7.200px;border-radius:50%;background:#6363c7;border:.800px solid #161616"></div>
<div class="t n r" style="left:303.9px;width:120px;top:172.20px;color:#e2e2e2">Geometry</div>
<div class="a" style="left:428.9px;top:173.2px;width:7.200px;height:7.200px;border-radius:50%;background:#46d6a0;border:.800px solid #161616"></div>
<div class="a" style="left:340.5px;top:192.6px;width:40.9px;height:11.5px;background:#4772b3;border-radius:3px 0 0 3px"></div>
<div class="a" style="left:382px;top:192.6px;width:42.6px;height:11.5px;background:#545454;border-radius:0 3px 3px 0"></div>
<div class="t n" style="left:340.5px;width:40.9px;text-align:center;top:193.80px;color:#fff">Original</div>
<div class="t n" style="left:382px;width:42.6px;text-align:center;top:193.80px;color:#e2e2e2">Relative</div>
<div class="a" style="left:340.5px;top:210.1px;width:84.100px;height:12.800px;background:#282828;border:.700px solid #3d3d3d;border-radius:3px"></div>
<svg style="left:343.5px;top:211.6px" width="10" height="10" viewBox="0 0 15 15"><path d="M1 4V1H4M11 1H14V4M14 11V14H11M4 14H1V11" fill="none" stroke="#d0d0d0" stroke-width="1.400"/><rect x="3.300" y="3.300" width="8.400" height="8.400" rx=".800" fill="#ececec"/></svg>
<div class="t n" style="left:358.6px;top:211.90px;color:#e2e2e2">Short Sprin...</div>
<svg style="left:414.5px;top:214px" width="5.500" height="5.500" viewBox="0 0 6 6"><path d="M.500 .500L5.500 5.500M5.500 .500L.500 5.500" stroke="#d0d0d0" stroke-width="1"/></svg>
<div class="a" style="left:328.6px;top:212.7px;width:7.200px;height:7.200px;border-radius:50%;background:#ed9e5c;border:.800px solid #161616"></div>
<div class="a" style="left:340.10px;top:227.00px;width:9.400px;height:9.400px;background:#555;border-radius:2px;border:.600px solid #3d3d3d"></div>
<div class="t n" style="left:352px;top:227.20px;color:#e2e2e2">As Instance</div>
<div class="a" style="left:328.6px;top:228.2px;width:7.200px;height:7.200px;border-radius:50%;background:#cca6d6;border:.800px solid #161616"></div>
<div class="a" style="left:548.3px;top:158.3px;width:98.9px;height:134.7px;background:#303030;border-radius:4px 4px 0 0;box-shadow:0 2px 5px rgba(0,0,0,.55),0 0 0 .700px #151515"></div>
<div class="a" style="left:548.3px;top:158.3px;width:98.9px;height:13.5px;background:#256285;border-radius:4px 4px 0 0"></div>
<svg style="left:555.8px;top:163.25px;color:#e6e6e6" width="6.500" height="4" viewBox="0 0 8 5" preserveAspectRatio="none"><path d="M0.7 0.7 L4 4 L7.3 0.7" fill="none" stroke="currentColor" stroke-width="1.3" stroke-linecap="round" stroke-linejoin="round"/></svg>
<div class="t n" style="left:566.3px;top:160.45px">Random Value</div>
<div class="t n r" style="left:519px;width:120px;top:177.40px;color:#e2e2e2">Value</div>
<div class="a" style="left:643.80px;top:178.60px;width:6.800px;height:6.800px;transform:rotate(45deg);background:#6363c7;border:.800px solid #161616"></div>
<div class="a" style="left:555.500px;top:198.500px;width:84.800px;height:13.200px;background:#282828;border:.700px solid #444;border-radius:3px"></div>
<div class="t n" style="left:560.5px;top:200.60px;color:#e2e2e2">Vector</div>
<svg style="left:632.5px;top:203.7px;color:#e0e0e0" width="5.500" height="3.500" viewBox="0 0 8 5" preserveAspectRatio="none"><path d="M0.7 0.7 L4 4 L7.3 0.7" fill="none" stroke="currentColor" stroke-width="1.3" stroke-linecap="round" stroke-linejoin="round"/></svg>
<div class="t n" style="left:556.2px;top:218.70px;color:#e2e2e2">Min:</div>
<div class="a" style="left:555.5px;top:231.5px;width:84.8px;height:12.2px;background:#545454;border-radius:3px 3px 0 0"></div>
<div class="a" style="left:555.5px;top:245.3px;width:84.8px;height:12.5px;background:#545454;border-radius:0"></div>
<div class="a" style="left:555.5px;top:259.3px;width:84.8px;height:13.1px;background:#545454;border-radius:0 0 3px 3px"></div>
<div class="t n" style="left:555.5px;width:84.8px;text-align:center;top:233.10px;color:#e2e2e2">0.000</div>
<div class="t n" style="left:555.5px;width:84.8px;text-align:center;top:247.00px;color:#e2e2e2">0.000</div>
<div class="t n" style="left:555.5px;width:84.8px;text-align:center;top:261.30px;color:#e2e2e2">0.000</div>
<div class="a" style="left:544.20px;top:241.30px;width:6.800px;height:6.800px;transform:rotate(45deg);background:#6363c7;border:.800px solid #161616"></div>
<div class="a" style="left:546.65px;top:243.75px;width:1.900px;height:1.900px;transform:rotate(45deg);background:#1d1d1d"></div>
<div class="t n" style="left:556.2px;top:277.00px;color:#e2e2e2">Max:</div>
<div class="a" style="left:770.4px;top:59px;width:98.9px;height:108.8px;background:#303030;border-radius:4px;box-shadow:0 2px 5px rgba(0,0,0,.55),0 0 0 .700px #151515"></div>
<div class="a" style="left:770.4px;top:59px;width:98.9px;height:13.8px;background:#256285;border-radius:4px 4px 0 0"></div>
<svg style="left:777.9px;top:64.1px;color:#e6e6e6" width="6.500" height="4" viewBox="0 0 8 5" preserveAspectRatio="none"><path d="M0.7 0.7 L4 4 L7.3 0.7" fill="none" stroke="currentColor" stroke-width="1.3" stroke-linecap="round" stroke-linejoin="round"/></svg>
<div class="t n" style="left:788.4px;top:61.30px">Rotate Euler</div>
<div class="t n r" style="left:740.7px;width:120px;top:78.40px;color:#e2e2e2">Rotation</div>
<div class="a" style="left:865.90px;top:79.60px;width:6.800px;height:6.800px;transform:rotate(45deg);background:#6363c7;border:.800px solid #161616"></div>
<div class="a" style="left:777.6px;top:98.6px;width:41.9px;height:12.5px;background:#545454;border-radius:3px 0 0 3px"></div>
<div class="a" style="left:820.1px;top:98.6px;width:41.6px;height:12.5px;background:#4772b3;border-radius:0 3px 3px 0"></div>
<div class="t n" style="left:777.6px;width:41.9px;text-align:center;top:100.30px;color:#e2e2e2">Axis Angle</div>
<div class="t n" style="left:820.1px;width:41.6px;text-align:center;top:100.30px;color:#fff">Euler</div>
<div class="a" style="left:777.6px;top:116.7px;width:41.9px;height:12.2px;background:#545454;border-radius:3px 0 0 3px"></div>
<div class="a" style="left:820.1px;top:116.7px;width:41.6px;height:12.2px;background:#4772b3;border-radius:0 3px 3px 0"></div>
<div class="t n" style="left:777.6px;width:41.9px;text-align:center;top:118.30px;color:#e2e2e2">Object</div>
<div class="t n" style="left:820.1px;width:41.6px;text-align:center;top:118.30px;color:#fff">Local</div>
<div class="t n" style="left:778.3px;top:135.80px;color:#e2e2e2">Rotation</div>
<div class="a" style="left:767.00px;top:137.00px;width:6.800px;height:6.800px;transform:rotate(45deg);background:#6363c7;border:.800px solid #161616"></div>
<div class="t n" style="left:778.3px;top:151.70px;color:#e2e2e2">Rotate By</div>
<div class="a" style="left:767.00px;top:152.90px;width:6.800px;height:6.800px;transform:rotate(45deg);background:#6363c7;border:.800px solid #161616"></div>
<div class="a" style="left:948px;top:13px;width:99.3px;height:187.1px;background:#303030;border-radius:0 0 4px 4px;box-shadow:0 2px 5px rgba(0,0,0,.55),0 0 0 .700px #151515"></div>
<div class="t n r" style="left:918.7px;width:120px;top:31.00px;color:#e2e2e2">Instances</div>
<div class="a" style="left:1043.7px;top:32.0px;width:7.200px;height:7.200px;border-radius:50%;background:#46d6a0;border:.800px solid #161616"></div>
<div class="t n" style="left:956px;top:48.40px;color:#e2e2e2">Points</div>
<div class="a" style="left:944.4px;top:49.4px;width:7.200px;height:7.200px;border-radius:50%;background:#46d6a0;border:.800px solid #161616"></div>
<div class="t n" style="left:956px;top:64.30px;color:#e2e2e2">Selection</div>
<div class="a" style="left:944.60px;top:65.50px;width:6.800px;height:6.800px;transform:rotate(45deg);background:#cca6d6;border:.800px solid #161616"></div>
<div class="a" style="left:947.05px;top:67.95px;width:1.900px;height:1.900px;transform:rotate(45deg);background:#1d1d1d"></div>
<div class="t n" style="left:956px;top:80.10px;color:#e2e2e2">Instance</div>
<div class="a" style="left:944.4px;top:81.1px;width:7.200px;height:7.200px;border-radius:50%;background:#46d6a0;border:.800px solid #161616"></div>
<div class="a" style="left:955.60px;top:95.70px;width:9.400px;height:9.400px;background:#555;border-radius:2px;border:.600px solid #3d3d3d"></div>
<div class="t n" style="left:968.2px;top:95.90px;color:#e2e2e2">Pick Instance</div>
<div class="a" style="left:944.60px;top:97.10px;width:6.800px;height:6.800px;transform:rotate(45deg);background:#cca6d6;border:.800px solid #161616"></div>
<div class="a" style="left:947.05px;top:99.55px;width:1.900px;height:1.900px;transform:rotate(45deg);background:#1d1d1d"></div>
<div class="t n" style="left:956px;top:111.40px;color:#e2e2e2">Instance Index</div>
<div class="a" style="left:944.60px;top:112.60px;width:6.800px;height:6.800px;transform:rotate(45deg);background:#598c5c;border:.800px solid #161616"></div>
<div class="t n" style="left:956px;top:126.90px;color:#e2e2e2">Rotation</div>
<div class="a" style="left:944.60px;top:128.10px;width:6.800px;height:6.800px;transform:rotate(45deg);background:#6363c7;border:.800px solid #161616"></div>
<div class="t n" style="left:956px;top:142.80px;color:#e2e2e2">Scale:</div>
<div class="a" style="left:955.7px;top:156.3px;width:84.0px;height:11.5px;background:#545454;border-radius:3px 3px 0 0"></div>
<div class="a" style="left:955.7px;top:169.4px;width:84.0px;height:12.6px;background:#545454;border-radius:0"></div>
<div class="a" style="left:955.7px;top:183.6px;width:84.0px;height:13.2px;background:#545454;border-radius:0 0 3px 3px"></div>
<div class="t n" style="left:966.5px;top:157.60px;color:#e2e2e2">X</div>
<div class="t n r" style="left:909.2px;width:120px;top:157.60px;color:#e2e2e2">1.000</div>
<div class="t n" style="left:966.5px;top:171.20px;color:#e2e2e2">Y</div>
<div class="t n r" style="left:909.2px;width:120px;top:171.20px;color:#e2e2e2">1.000</div>
<div class="t n" style="left:966.5px;top:185.70px;color:#e2e2e2">Z</div>
<div class="t n r" style="left:909.2px;width:120px;top:185.70px;color:#e2e2e2">1.000</div>
<div class="a" style="left:944.60px;top:165.70px;width:6.800px;height:6.800px;transform:rotate(45deg);background:#6363c7;border:.800px solid #161616"></div>
<div class="a" style="left:947.05px;top:168.15px;width:1.900px;height:1.900px;transform:rotate(45deg);background:#1d1d1d"></div>
<div class="a" style="left:0;top:0;width:1188px;height:27px;background:#1d1d1d"></div>
<svg style="left:0.5px;top:44px" width="4.500" height="8" viewBox="0 0 5 8"><path d="M.700 .700L4.200 4L.700 7.300" fill="none" stroke="#c0c0c0" stroke-width="1.200"/></svg>
<svg style="left:18.5px;top:40.5px" width="14" height="14" viewBox="0 0 14 14"><rect x="1" y="1" width="8.500" height="5" rx="1" fill="#e6e6e6"/><rect x="1" y="8" width="8.500" height="5" rx="1" fill="#e6e6e6"/><path d="M9.500 3.500h1.700c1.200 0 1.800.8 1.800 1.800v3.400c0 1-.6 1.800-1.800 1.800H9.500" fill="none" stroke="#e6e6e6" stroke-width="1.100"/></svg>
<div class="t" style="left:41.3px;top:40.9px;color:#e0e0e0">Geometry Nodes.001</div>
<svg style="left:1181.5px;top:43.5px" width="4.500" height="8" viewBox="0 0 5 8"><path d="M4.300 .700L.800 4L4.300 7.300" fill="none" stroke="#c0c0c0" stroke-width="1.200"/></svg>
</div>

<!-- NODE EDITOR HEADER -->
<div class="btn" style="left:64.500px;top:551.500px;width:31.500px;height:19px"></div>
<svg style="left:68.500px;top:554px" width="14" height="14" viewBox="0 0 14 14"><rect x="1" y="1" width="8.500" height="5" rx="1" fill="#e6e6e6"/><rect x="1" y="8" width="8.500" height="5" rx="1" fill="#e6e6e6"/><path d="M9.500 3.500h1.700c1.200 0 1.800.8 1.800 1.800v3.400c0 1-.6 1.800-1.800 1.800H9.500" fill="none" stroke="#e6e6e6" stroke-width="1.100"/></svg>
<svg style="left:86px;top:559.500px;color:#e0e0e0" width="7" height="4.500" viewBox="0 0 8 5" preserveAspectRatio="none"><path d="M0.7 0.7 L4 4 L7.3 0.7" fill="none" stroke="currentColor" stroke-width="1.3" stroke-linecap="round" stroke-linejoin="round"/></svg>
<div class="t" style="left:108.300px;top:554px">View</div>
<div class="t" style="left:149px;top:554px">Select</div>
<div class="t" style="left:196.500px;top:554px">Add</div>
<div class="t" style="left:232.200px;top:554px">Node</div>
<!-- node tree selector -->
<div class="a" style="left:517.500px;top:551.500px;width:220px;height:19px;border:1px solid #333;border-radius:4px;background:#1d1d1d;overflow:hidden">
<div class="a" style="left:0;top:0;width:29px;height:17px;background:#282828;border-right:1px solid #3a3a3a"></div>
<div class="a" style="left:158.500px;top:0;width:60px;height:17px;background:#2b2b2b"></div>
<div class="a" style="left:178.500px;top:0;width:1px;height:17px;background:#232323"></div>
<div class="a" style="left:199px;top:0;width:1px;height:17px;background:#232323"></div>
</div>
<svg style="left:522px;top:554.500px" width="14" height="14" viewBox="0 0 14 14"><rect x="1" y="1" width="8.500" height="5" rx="1" fill="#9a9a9a"/><rect x="1" y="8" width="8.500" height="5" rx="1" fill="#9a9a9a"/><path d="M9.500 3.500h1.700c1.200 0 1.800.8 1.800 1.800v3.400c0 1-.6 1.800-1.800 1.800H9.500" fill="none" stroke="#9a9a9a" stroke-width="1.100"/></svg>
<svg style="left:538px;top:559.500px;color:#5a5a5a" width="7" height="4.500" viewBox="0 0 8 5" preserveAspectRatio="none"><path d="M0.7 0.7 L4 4 L7.3 0.7" fill="none" stroke="currentColor" stroke-width="1.3" stroke-linecap="round" stroke-linejoin="round"/></svg>
<div class="t" style="left:555.800px;top:554px;color:#8e8e8e">Geometry Nodes.001</div>
<svg style="left:680.500px;top:554px" width="13" height="15" viewBox="0 0 13 15"><path d="M6.500 1C4.500 2.300 2.800 2.600 1 2.600V7c0 3.600 2.400 5.800 5.500 7 3.100-1.200 5.500-3.400 5.500-7V2.600c-1.800 0-3.500-.3-5.500-1.600z" fill="none" stroke="#6e6e6e" stroke-width="1.200"/></svg>
<svg style="left:700.500px;top:554.500px" width="14" height="14" viewBox="0 0 15 15" fill="none" stroke="#6e6e6e" stroke-width="1.200"><path d="M4.500 3.500V1.100h5.600l3 3V10.500H4.500z"/><path d="M9.900 1.100v3.200h3.200"/><path d="M4.500 4H1.200v9.600h8.600v-3"/></svg>
<svg style="left:722.500px;top:556.500px" width="10" height="10" viewBox="0 0 10 10"><path d="M1 1L9 9M9 1L1 9" stroke="#6e6e6e" stroke-width="1.100"/></svg>
<svg style="left:745px;top:552.500px" width="16" height="16" viewBox="0 0 16 16"><path d="M10 .800l5.200 5.200-1.800.4-2.600 2.600-.2 3.400L5 6.800l3.400-.2L11 4z" fill="#f4f4f4"/><path d="M6.600 9.400L1 15" stroke="#f4f4f4" stroke-width="1.500" stroke-linecap="round"/></svg>
<!-- right widgets -->
<div class="a" style="left:1115.500px;top:551.500px;width:19px;height:19px;border-radius:4px;background:#2b2b2b;border:1px solid #333"></div>
<svg style="left:1119px;top:554px" width="12" height="14" viewBox="0 0 12 14" fill="none" stroke="#5c5c5c" stroke-width="1.200"><path d="M6 13V2.500M2 6L6 2l4 4M6 13h5"/></svg>
<div class="btn" style="left:1140.500px;top:551.500px;width:51.500px;height:19px;overflow:hidden"><div class="a" style="left:0;top:0;width:19px;height:17px;background:#545454"></div></div>
<svg style="left:1143px;top:553px" width="15" height="16" viewBox="0 0 15 16"><path d="M2.800 6.600L6.200 3.300A4.500 4.500 0 0 1 12.400 9.700L9 13" fill="none" stroke="#a6a6a6" stroke-width="3.700" stroke-linecap="butt"/><path d="M3.300 6.100L6.200 3.300A4.500 4.500 0 0 1 12.400 9.700L9.500 12.500" fill="none" stroke="#555" stroke-width="1.500" stroke-linecap="butt"/></svg>
<svg style="left:1163px;top:553.500px" width="15" height="15" viewBox="0 0 15 15"><path d="M5.500 0V15M11 0V15M0 5.500H15M0 11H15" stroke="#dcdcdc" stroke-width="1.100"/><rect x="1" y="1" width="5" height="5" fill="#f0f0f0"/></svg>
<svg style="left:1181.500px;top:559.500px;color:#e0e0e0" width="7" height="4.500" viewBox="0 0 8 5" preserveAspectRatio="none"><path d="M0.7 0.7 L4 4 L7.3 0.7" fill="none" stroke="currentColor" stroke-width="1.3" stroke-linecap="round" stroke-linejoin="round"/></svg>
<div class="btn" style="left:1197px;top:551.500px;width:40px;height:19px;overflow:hidden"><div class="a blue" style="left:0;top:0;width:19px;height:17px"></div></div>
<svg style="left:1199px;top:553px" width="16" height="15" viewBox="0 0 16 15"><circle cx="9.600" cy="5.600" r="4.600" fill="#fff"/><circle cx="6.200" cy="8.800" r="4.600" fill="none" stroke="#fff" stroke-width="1.200"/><path d="M6.200 4.200a4.600 4.600 0 0 1 4.600 4.600" fill="none" stroke="#4772b3" stroke-width="1.200"/></svg>
<svg style="left:1222.500px;top:559.500px;color:#e0e0e0" width="7" height="4.500" viewBox="0 0 8 5" preserveAspectRatio="none"><path d="M0.7 0.7 L4 4 L7.3 0.7" fill="none" stroke="currentColor" stroke-width="1.3" stroke-linecap="round" stroke-linejoin="round"/></svg>

<!-- STATUS BAR -->
<div class="a" id="sb" style="left:56px;top:831px;width:1440px;height:19.500px;background:#1b1b1b"></div>
<svg style="left:69.500px;top:834px" width="10" height="13" viewBox="0 0 10 13"><rect x=".600" y=".600" width="8.800" height="11.800" rx="3" fill="none" stroke="#b0b0b0" stroke-width="1.100"/><path d="M.600 5.500V3.600a3 3 0 0 1 3-3H4.600V5.500z" fill="#b0b0b0"/></svg>
<div class="t" style="left:89.800px;top:833.600px;color:#a4a4a4">Scroller Activate</div>
<svg style="left:188.500px;top:833.500px" width="18" height="14" viewBox="0 0 18 14"><rect x=".600" y="1.600" width="8.800" height="11.800" rx="3" fill="none" stroke="#b0b0b0" stroke-width="1.100"/><path d="M.600 6.500V4.600a3 3 0 0 1 3-3H4.600V6.500z" fill="#b0b0b0"/><path d="M12.500 .500V7M15 2V6" stroke="#b0b0b0" stroke-width="1"/></svg>
<div class="t" style="left:213px;top:833.600px;color:#a4a4a4">Box Select</div>
<svg style="left:313px;top:834px" width="10" height="13" viewBox="0 0 10 13"><rect x=".600" y=".600" width="8.800" height="11.800" rx="3" fill="none" stroke="#b0b0b0" stroke-width="1.100"/><rect x="3.600" y="1.800" width="2.800" height="4.400" rx="1" fill="#b0b0b0"/></svg>
<div class="t" style="left:334.300px;top:833.600px;color:#a4a4a4">Scroller Activate</div>
<svg style="left:557px;top:834px" width="10" height="13" viewBox="0 0 10 13"><rect x=".600" y=".600" width="8.800" height="11.800" rx="3" fill="none" stroke="#b0b0b0" stroke-width="1.100"/><path d="M9.400 5.500V3.600a3 3 0 0 0-3-3H5.400V5.500z" fill="#b0b0b0"/></svg>
<div class="t" style="left:579px;top:833.600px;color:#a4a4a4">Context Menu</div>
<div class="a" style="left:809px;top:832.500px;width:191px;height:18px;border:1px solid #2c466f;border-radius:3px;background:#1b2a43;overflow:hidden"><div class="a" style="left:0;top:0;width:23.500px;height:17px;background:#1e4a8c"></div></div>
<svg style="left:814.500px;top:834px" width="13" height="14" viewBox="0 0 13 14"><path d="M1.500 .500h10a1 1 0 0 1 1 1v8a1 1 0 0 1-1 1H6L3 13.500V10.500H1.500a1 1 0 0 1-1-1v-8a1 1 0 0 1 1-1z" fill="#f4f4f4"/><path d="M6.500 2.200v1.500M5.300 5h1.400v3.500M5.200 8.500h2.800" stroke="#1e4a8c" stroke-width="1.300" fill="none"/></svg>
<div class="t" style="left:838px;top:833.600px;color:#ececec">Objects moved to Sprinkles</div>
<div class="t r" style="left:1387px;width:100px;top:833.600px;color:#a4a4a4">3.0.0</div>

</div>
</body>
</html>
